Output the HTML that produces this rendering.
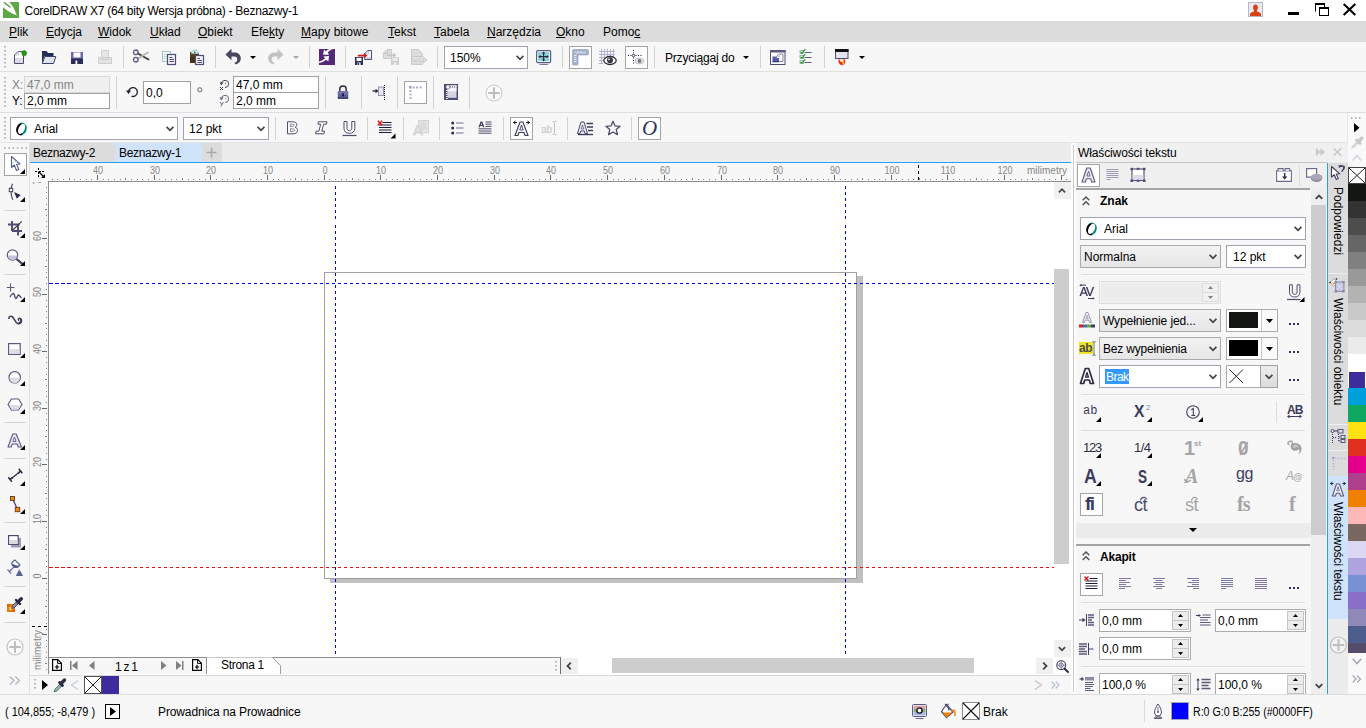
<!DOCTYPE html>
<html><head><meta charset="utf-8"><title>CorelDRAW X7</title>
<style>
*{box-sizing:border-box;margin:0;padding:0}
html,body{width:1366px;height:728px;overflow:hidden;background:#f0f0f0}
body{font-family:"Liberation Sans",sans-serif;font-size:12px;color:#000;position:relative}
.a{position:absolute}
.t{position:absolute;white-space:nowrap;line-height:14px;height:14px}
svg{position:absolute;overflow:visible}
.sep{position:absolute;width:1px;background:#d2d2d2}
.inp{position:absolute;background:#fff;border:1px solid #a0a0a0}
.dd{position:absolute;background:#fff;border:1px solid #a0a0a0}
u{text-decoration:underline;text-underline-offset:1px}
.rl{font-size:10px;color:#868686;line-height:12px;height:12px}
.gr{background:linear-gradient(#f2f2f2,#e6e6e6);border-color:#ababab}
.hl{height:1px;background:#dedede}
.spb{background:#ececec;border:1px solid #c4c4c4}
</style></head><body>
<svg width="0" height="0" style="left:0;top:0"><defs><linearGradient id="og" x1="0" y1="0.800" x2="1" y2="0.200"><stop offset="0.520" stop-color="#000"/><stop offset="0.520" stop-color="#088"/></linearGradient></defs></svg>
<!-- title bar -->
<div class="a" style="left:0;top:0;width:1366px;height:21px;background:#fff"></div>
<svg style="left:3px;top:2px" width="16" height="16" viewBox="0 0 16 16"><rect width="16" height="16" fill="#5aa846"/><path d="M0 0H5.800C8.500 2 10.800 5.500 13.800 13.600C9 11.500 4 9 0 5.200z" fill="#fff"/><path d="M1.400 0.700L7 5" stroke="#5aa846" stroke-width="1.500" stroke-linecap="round"/></svg>
<div class="t" id="title" style="left:24.5px;top:4px;letter-spacing:-0.27px">CorelDRAW X7 (64 bity Wersja próbna) - Beznazwy-1</div>
<!-- window controls -->
<svg style="left:1248px;top:2px" width="15" height="15" viewBox="0 0 15 15"><rect x="0.5" y="0.5" width="14" height="14" fill="#e8e8ee" stroke="#b8b8c4"/><path d="M7.5 2.5c1.6 0 2.4 1.4 2.4 3 0 1.3-.6 2.3-1.1 2.9 0 1 1 1.400 2.600 2.100 1.100.4 1.600 1 1.600 2.500v1h-11v-1c0-1.500.5-2.100 1.600-2.500 1.600-.7 2.600-1.100 2.600-2.100-.5-.6-1.100-1.600-1.100-2.900 0-1.600.8-3 2.400-3z" fill="#d8400e"/></svg>
<div class="a" style="left:1288px;top:12px;width:11px;height:3px;background:#000"></div>
<svg style="left:1315px;top:3px" width="14" height="13" viewBox="0 0 14 13"><path d="M0.500 8.500V1h9v3" fill="none" stroke="#000" stroke-width="1"/><rect x="0" y="0" width="10" height="2" fill="#000"/><rect x="4.500" y="4.500" width="9" height="8" fill="#fff" stroke="#000"/><rect x="4" y="4" width="10" height="2" fill="#000"/></svg>
<svg style="left:1343px;top:4px" width="13" height="11" viewBox="0 0 13 11"><path d="M0.700 0 L12.300 11 M12.300 0 L0.700 11" stroke="#000" stroke-width="2.100" fill="none"/></svg>
<!-- menu bar -->
<div class="a" style="left:0;top:21px;width:1366px;height:21px;background:#dcdcdc"></div>
<div class="t m" style="left:9px;top:25px"><u>P</u>lik</div>
<div class="t m" style="left:46px;top:25px"><u>E</u>dycja</div>
<div class="t m" style="left:98px;top:25px"><u>W</u>idok</div>
<div class="t m" style="left:150px;top:25px"><u>U</u>kład</div>
<div class="t m" style="left:198px;top:25px"><u>O</u>biekt</div>
<div class="t m" style="left:251px;top:25px">Efe<u>k</u>ty</div>
<div class="t m" style="left:301px;top:25px"><u>M</u>apy bitowe</div>
<div class="t m" style="left:388px;top:25px"><u>T</u>ekst</div>
<div class="t m" style="left:434px;top:25px"><u>T</u>abela</div>
<div class="t m" style="left:487px;top:25px"><u>N</u>arzędzia</div>
<div class="t m" style="left:556px;top:25px"><u>O</u>kno</div>
<div class="t m" style="left:603px;top:25px">Pomo<u>c</u></div>
<!-- toolbar 1 -->
<div class="a" style="left:0;top:42px;width:1366px;height:30px;background:#f7f7f7;border-bottom:1px solid #dedede"></div>
<svg style="left:4px;top:46px" width="2" height="24"><g fill="#b4b4b4"><rect y="0" width="2" height="1.500"/><rect y="4" width="2" height="1.500"/><rect y="8" width="2" height="1.500"/><rect y="12" width="2" height="1.500"/><rect y="16" width="2" height="1.500"/><rect y="20" width="2" height="1.500"/></g></svg>
<!-- new -->
<svg style="left:13px;top:49px" width="16" height="16" viewBox="0 0 16 16"><path d="M1.500 14.500V6L5 2.500h5.500v12z" fill="#fff" stroke="#4a4a6e"/><rect x="2" y="9" width="8" height="5" fill="#dcdce8"/><path d="M2 6h3.500V2.500" fill="none" stroke="#a8c4c0" stroke-width="0.800"/><g transform="translate(11.200 4) scale(0.800) translate(-11.200 -4.300)"><path d="M11.200 0.300l.9 1.300 1.500-.5 0 1.600 1.500.5-.9 1.300.9 1.300-1.500.5 0 1.600-1.500-.5-.9 1.300-.9-1.300-1.500.5 0-1.600-1.500-.5.9-1.300-.9-1.300 1.500-.5 0-1.600 1.500.5z" fill="#2a9010"/></g></svg>
<!-- open -->
<svg style="left:41px;top:49px" width="16" height="16" viewBox="0 0 16 16"><path d="M1 14.500V2h4.500l1.500 2h5.500v3H3.500z" fill="#252c58"/><path d="M1.300 14.500L3.800 7.500h11L12.500 14.500z" fill="#e2e2ec" stroke="#3a3f6a"/></svg>
<!-- save -->
<svg style="left:70px;top:51px" width="14" height="14" viewBox="0 0 14 14"><path d="M1 1h10.500L13 2.500V13H1z" fill="#2c2c5a"/><rect x="1" y="1" width="12" height="6.500" fill="#6a6ab0"/><rect x="3.500" y="1.500" width="7" height="5" fill="#fff"/><rect x="4" y="9" width="6" height="4" fill="#2c2c5a"/><rect x="5.500" y="9.500" width="1.800" height="3.500" fill="#fff"/></svg>
<!-- print disabled -->
<svg style="left:97px;top:49px" width="16" height="16" viewBox="0 0 16 16"><rect x="4.500" y="1.500" width="7" height="7" fill="#e6e6e6" stroke="#d2d2d2"/><rect x="1.500" y="8.500" width="13" height="6" fill="#e4e4e4" stroke="#cfcfcf"/><rect x="3.500" y="9.500" width="9" height="1.500" fill="#cfcfcf"/></svg>
<div class="sep" style="left:123px;top:46px;height:22px"></div>
<!-- cut -->
<svg style="left:132px;top:49px" width="18" height="15" viewBox="0 0 18 15"><path d="M6 4.500L16.500 10.500" stroke="#3a3a3a" stroke-width="1.800" stroke-linecap="round"/><path d="M6 9.500L16 3.500" stroke="#b8b4b0" stroke-width="1.800" stroke-linecap="round"/><circle cx="3.800" cy="3.300" r="2.300" fill="none" stroke="#5a5a84" stroke-width="1.300"/><circle cx="3.800" cy="10.700" r="2.300" fill="none" stroke="#5a5a84" stroke-width="1.300"/></svg>
<!-- copy -->
<svg style="left:161px;top:50px" width="16" height="16" viewBox="0 0 16 16"><rect x="1.500" y="1.500" width="8" height="10" fill="#f4faf9" stroke="#9cc8c2"/><path d="M3 4.500h5M3 6.500h5M3 8.500h3" stroke="#b8dcd6"/><rect x="6.500" y="4.500" width="8" height="10" fill="#f2f2f8" stroke="#4c4c74" stroke-width="1.200"/><path d="M8.500 7.500h3M8.500 9.500h4.500M8.500 11.500h4.500" stroke="#4c4c74" stroke-width="1.100"/></svg>
<!-- paste -->
<svg style="left:189px;top:49px" width="16" height="17" viewBox="0 0 16 17"><rect x="1" y="3" width="9" height="11" fill="#5a3c20"/><rect x="1" y="8" width="9" height="6" fill="#4a3018"/><path d="M2.500 4.500v-1.500l2-1.800h3l2 1.800v1.500z" fill="#d8ecea" stroke="#8cc0ba" stroke-width="0.800"/><circle cx="5.800" cy="3.200" r="0.800" fill="#333"/><rect x="6.500" y="6.500" width="8" height="9" fill="#f2f2f8" stroke="#4c4c74" stroke-width="1.200"/><path d="M8.500 9.500h2.500M8.500 11.500h4.500M8.500 13.500h4.500" stroke="#4c4c74" stroke-width="1.100"/></svg>
<div class="sep" style="left:215px;top:46px;height:22px"></div>
<!-- undo -->
<svg style="left:225px;top:48px" width="17" height="17" viewBox="0 0 17 17"><path d="M0.500 6.500L6.500 0.800V4.500H9.500C13.500 4.500 15.800 7.200 15.800 10.500C15.800 13.800 13.200 16.200 10 16.300L9.500 14.800C11.500 14.300 12.300 12.800 12.300 11.200C12.300 9.500 11 8.500 9.500 8.500H6.500V12.200z" fill="#4a4660"/></svg>
<svg style="left:250px;top:56px" width="6" height="3" viewBox="0 0 6 3"><path d="M0 0h6L3 3z" fill="#000"/></svg>
<!-- redo -->
<svg style="left:267px;top:48px" width="17" height="17" viewBox="0 0 17 17"><g transform="translate(17,0) scale(-1,1)"><path d="M0.500 6.500L6.500 0.800V4.500H9.500C13.500 4.500 15.800 7.200 15.800 10.500C15.800 13.800 13.200 16.200 10 16.300L9.500 14.800C11.500 14.300 12.300 12.800 12.300 11.200C12.300 9.500 11 8.500 9.500 8.500H6.500V12.200z" fill="#c2c2c2"/></g></svg>
<svg style="left:293px;top:56px" width="6" height="3" viewBox="0 0 6 3"><path d="M0 0h6L3 3z" fill="#a8a8a8"/></svg>
<div class="sep" style="left:309px;top:46px;height:22px"></div>
<!-- publish -->
<svg style="left:319px;top:49px" width="16" height="16" viewBox="0 0 16 16"><rect width="16" height="16" fill="#542878"/><path d="M14 0C11.500 0.800 9.800 2 8.800 3.400L10 5.800H4.200L4.900 0.500L6.700 2.200C7.800 1.100 9.300 0.400 11 0z" fill="#fff"/><path d="M0 14C3 13.400 5.600 12.200 7.200 10.800L9.400 12.600L10 6.900L4.400 7.600L6.100 9.300C4.600 10.900 2.200 12.100 0 12.700z" fill="#fff"/></svg>
<div class="sep" style="left:345px;top:46px;height:22px"></div>
<!-- import -->
<svg style="left:355px;top:49px" width="17" height="17" viewBox="0 0 17 17"><path d="M9.800 10.500V4.500L13 1.500h3.500v9z" fill="#f4f4f8" stroke="#4c4c74" stroke-width="1"/><path d="M10.500 5h3V2" fill="none" stroke="#9cc8c2" stroke-width="0.800"/><rect x="10.300" y="8.500" width="5.700" height="1.500" fill="#c8c8dc"/><rect x="0" y="8" width="8" height="8" fill="#2c2c5a"/><rect x="1.500" y="8.800" width="5" height="3.200" fill="#fff"/><rect x="2.500" y="13.500" width="3" height="2.500" fill="#fff"/><rect x="3" y="14" width="1.200" height="2" fill="#2c2c5a"/><path d="M2.800 5.800h6v-2l3.500 2.800-3.500 2.800v-2h-6z" fill="#d01818"/></svg>
<!-- export disabled -->
<svg style="left:383px;top:49px" width="17" height="17" viewBox="0 0 17 17"><path d="M0.500 9.500V4L4 0.500h4.500v9z" fill="#dedede" stroke="#cacaca"/><path d="M4.500 0.500v4h-4" fill="none" stroke="#c6c6c6"/><path d="M4 5.500h6v-2l3.500 2.800-3.500 2.800v-2H4z" fill="#c4c4c4"/><rect x="8" y="8" width="8" height="8" fill="#cecece"/><rect x="9.500" y="8.800" width="5" height="3.200" fill="#ececec"/><rect x="10.500" y="13.500" width="3" height="2.500" fill="#ececec"/></svg>
<!-- pdf disabled -->
<svg style="left:411px;top:49px" width="17" height="17" viewBox="0 0 17 17"><path d="M0.500 15.500V0.500h7l4 4v3l4.500 3.500-4.500 3.500v1z" fill="#dcdcdc" stroke="#cacaca"/><rect x="1.500" y="7" width="11" height="5.500" fill="#c4c4c4"/><text x="2" y="11.800" font-family="Liberation Sans" font-weight="bold" font-size="5.500" fill="#f4f4f4">PDF</text></svg>
<div class="sep" style="left:437px;top:46px;height:22px"></div>
<!-- zoom dropdown -->
<div class="dd" style="left:444px;top:46px;width:84px;height:23px;border-color:#a2a2b0"></div>
<div class="t" style="left:450px;top:51px">150%</div>
<svg class="chev" style="left:516px;top:55px" width="8" height="6" viewBox="0 0 8 6"><path d="M0.600 0.800L4 4.300L7.400 0.800" fill="none" stroke="#444" stroke-width="1.700"/></svg>
<!-- fullscreen -->
<svg style="left:536px;top:50px" width="16" height="16" viewBox="0 0 16 16"><rect x="0.600" y="0.600" width="14" height="12" rx="1.200" fill="#fff" stroke="#5a5a84" stroke-width="1.200"/><rect x="2" y="2" width="11.200" height="9.200" fill="#8ed0dc"/><path d="M7.600 2.300v8.600M3.200 6.600h8.800" stroke="#2a2a3c" stroke-width="1.200"/><path d="M7.600 1.600l1.700 2h-3.400zM7.600 11.600l1.700-2h-3.400zM2.400 6.600l2-1.700v3.400zM12.800 6.600l-2-1.700v3.400z" fill="#2a2a3c"/><rect x="3.500" y="14" width="8.500" height="1" fill="#7a7aa0"/></svg>
<div class="sep" style="left:562px;top:46px;height:22px"></div>
<!-- rulers toggle -->
<div class="a" style="left:569px;top:46px;width:23px;height:23px;background:#fff;border:1px solid #a4a4a4"></div>
<svg style="left:572px;top:49px" width="17" height="16" viewBox="0 0 17 16"><path d="M0.500 1.500a1 1 0 0 1 1-1h14a1 1 0 0 1 1 1v3.500a1 1 0 0 1-1 1H6v9a1 1 0 0 1-1 1H1.500a1 1 0 0 1-1-1z" fill="#a4b0cc" stroke="#8c98b8" stroke-width="0.600"/><path d="M3 2.500l1.500 2 1.500-2 1.500 2 1.500-2 1.500 2 1.500-2 1.500 2" stroke="#e8ecf6" stroke-width="1" fill="none"/><path d="M2 6.500h2.500M2 8.500h2.500M2 10.500h2.500M2 12.500h2.500" stroke="#e8ecf6" stroke-width="1.200"/></svg>
<!-- grid eye -->
<svg style="left:599px;top:49px" width="18" height="17" viewBox="0 0 18 17"><path d="M2.500 0v15M5.500 0v8M8.500 0v8M11.500 0v8M14.500 0v8M0 2.500h16M0 5.500h16M0 8.500h6M0 11.500h4M0 14.500h4" stroke="#b0b0d4" stroke-width="1"/><ellipse cx="11" cy="11.500" rx="6.200" ry="4" fill="#fff" stroke="#2c2c34" stroke-width="1.300"/><circle cx="11" cy="11.300" r="3" fill="#3a3a44"/><circle cx="10" cy="10.300" r="0.900" fill="#fff"/></svg>
<!-- guidelines toggle -->
<div class="a" style="left:625px;top:46px;width:23px;height:23px;background:#fff;border:1px solid #a4a4a4"></div>
<svg style="left:627px;top:49px" width="18" height="17" viewBox="0 0 18 17"><path d="M6.500 1v15" stroke="#1a1a3a" stroke-width="1" stroke-dasharray="1 1.500"/><path d="M1 6.500h15" stroke="#1a1a3a" stroke-width="1" stroke-dasharray="1 1.500"/><circle cx="6.500" cy="6.500" r="1.200" fill="#fff" stroke="#1a1a3a" stroke-width="0.800"/><ellipse cx="12.500" cy="12" rx="4.500" ry="2.800" fill="#e8e8ec" stroke="#b4b4bc" stroke-width="0.900"/><circle cx="12.500" cy="11.900" r="2" fill="#77777f"/></svg>
<div class="sep" style="left:654px;top:46px;height:22px"></div>
<div class="t" id="snap" style="left:665px;top:51px;letter-spacing:-0.2px">Przyciągaj do</div>
<svg style="left:743px;top:56px" width="6" height="3" viewBox="0 0 6 3"><path d="M0 0h6L3 3z" fill="#000"/></svg>
<div class="sep" style="left:760px;top:46px;height:22px"></div>
<!-- options -->
<svg style="left:770px;top:50px" width="16" height="15" viewBox="0 0 16 15"><rect x="0.500" y="0.500" width="14.500" height="14" fill="#fff" stroke="#4c4c74" stroke-width="1"/><rect x="0" y="0" width="15.500" height="2.500" fill="#5a5a84"/><path d="M6.500 11.500V6.500L9 4h4v7.500z" fill="#f4f4f8" stroke="#6a6a94" stroke-width="0.800"/><path d="M7 6.500h2.500V4.500" fill="none" stroke="#9cc8c2" stroke-width="0.700"/><path d="M2.500 12V6.500h3l1 1.500h2.500v4z" fill="#5a5aa4"/><rect x="2.500" y="11" width="6.500" height="1.300" fill="#3c3c84"/></svg>
<!-- checklist -->
<svg style="left:799px;top:48px" width="14" height="17" viewBox="0 0 14 17"><g fill="#fff" stroke="#9c9cb4" stroke-width="0.800"><rect x="1" y="2.500" width="3.500" height="3"/><rect x="1" y="7.500" width="3.500" height="3"/><rect x="1" y="12.500" width="3.500" height="3"/></g><path d="M5.500 4.500h7M5.500 9.500h7M5.500 14.500h7" stroke="#5a5a84" stroke-width="1"/><path d="M1.500 3.800l1.300 1.300L6.300 1.200M1.500 8.800l1.300 1.300L6.300 6.200M1.500 13.800l1.300 1.300L6.300 11.200" fill="none" stroke="#18a018" stroke-width="1.200"/></svg>
<div class="sep" style="left:824px;top:46px;height:22px"></div>
<!-- launcher -->
<svg style="left:835px;top:49px" width="14" height="17" viewBox="0 0 14 17"><rect x="0.500" y="0.500" width="12.500" height="9" fill="#e4e4ec" stroke="#4c4c74" stroke-width="1"/><rect x="0" y="0" width="13.500" height="3" fill="#101018"/><path d="M3.500 10.500h6.500c1 2.500 0 5-3 5.800C4 15.500 2.800 13 3.500 10.500z" fill="#f02818"/><path d="M6 11.500h3c.8 2 0 3.800-1.800 4.600.8-1.800.2-3.200-1.200-4.600z" fill="#ffb020"/><ellipse cx="6.500" cy="11.500" rx="1.800" ry="1.200" fill="#f7f7f7"/></svg>
<svg style="left:859px;top:56px" width="6" height="3" viewBox="0 0 6 3"><path d="M0 0h6L3 3z" fill="#000"/></svg>
<!-- property bar -->
<div class="a" style="left:0;top:72px;width:1366px;height:41px;background:#f7f7f7;border-bottom:1px solid #dedede"></div>
<svg style="left:4px;top:77px" width="2" height="32"><g fill="#b4b4b4"><rect y="0" width="2" height="1.500"/><rect y="4" width="2" height="1.500"/><rect y="8" width="2" height="1.500"/><rect y="12" width="2" height="1.500"/><rect y="16" width="2" height="1.500"/><rect y="20" width="2" height="1.500"/><rect y="24" width="2" height="1.500"/><rect y="28" width="2" height="1.500"/></g></svg>
<div class="t" style="left:12px;top:78px;color:#848484">X:</div>
<div class="a" style="left:24px;top:76px;width:86px;height:17px;background:#f0f0f0;border:1px solid #d8d8d8"></div>
<div class="t" style="left:27px;top:78px;color:#848484">47,0 mm</div>
<div class="t" style="left:12px;top:94px">Y:</div>
<div class="inp" style="left:24px;top:93px;width:86px;height:16px"></div>
<div class="t" style="left:27px;top:94px">2,0 mm</div>
<div class="sep" style="left:116px;top:76px;height:33px"></div>
<!-- rotate icon -->
<svg style="left:126px;top:86px" width="13" height="13" viewBox="0 0 13 13"><path d="M5.500 10.200A4.400 4.400 0 1 0 2.600 5.700" fill="none" stroke="#1c1c2c" stroke-width="1.300"/><path d="M0 4.600h5L2.500 8z" fill="#1c1c2c"/></svg>
<div class="inp" style="left:143px;top:81px;width:48px;height:23px"></div>
<div class="t" style="left:146px;top:86px">0,0</div>
<svg style="left:197px;top:87px" width="6" height="6" viewBox="0 0 6 6"><circle cx="2.800" cy="2.800" r="2.100" fill="none" stroke="#555" stroke-width="0.900"/></svg>
<!-- small rotate x / y -->
<svg style="left:219px;top:79px" width="11" height="12" viewBox="0 0 11 12"><path d="M2.500 5A3.600 3.600 0 1 1 6 8.500" fill="none" stroke="#4a4a5c" stroke-width="1"/><path d="M0.500 3.200L4.500 3.600L2.300 6.600z" fill="#4a4a5c"/><circle cx="6.500" cy="4.500" r="0.600" fill="#4a4a5c"/><path d="M1 8l3 3M4 8l-3 3" stroke="#33333f" stroke-width="1"/></svg>
<svg style="left:219px;top:94px" width="11" height="13" viewBox="0 0 11 13"><path d="M2.500 5A3.600 3.600 0 1 1 6 8.500" fill="none" stroke="#6a6a7c" stroke-width="1"/><path d="M0.500 3.200L4.500 3.600L2.300 6.600z" fill="#6a6a7c"/><circle cx="6.500" cy="4.500" r="0.600" fill="#6a6a7c"/><path d="M1 8l1.800 2.500M4.500 8l-2.800 4.500" stroke="#6a6a7c" stroke-width="1" fill="none"/></svg>
<div class="inp" style="left:233px;top:76px;width:86px;height:17px"></div>
<div class="t" style="left:236px;top:78px">47,0 mm</div>
<div class="inp" style="left:233px;top:92px;width:86px;height:17px"></div>
<div class="t" style="left:236px;top:94px">2,0 mm</div>
<div class="sep" style="left:325px;top:76px;height:33px"></div>
<!-- lock -->
<svg style="left:337px;top:85px" width="12" height="14" viewBox="0 0 12 14"><path d="M2.800 6.500V4.200a3.200 3.200 0 0 1 6.400 0V6.500" fill="none" stroke="#2c2c3c" stroke-width="1.500"/><rect x="0.800" y="6" width="10.400" height="7.800" rx="0.800" fill="#5c5c98"/><rect x="0.800" y="6" width="10.400" height="3.500" rx="0.800" fill="#7474ac"/><rect x="0.800" y="12.300" width="10.400" height="1.500" fill="#3a3a6c"/><rect x="5.300" y="8.300" width="1.500" height="3" fill="#111"/></svg>
<div class="sep" style="left:361px;top:76px;height:33px"></div>
<!-- treat as filled / snap -->
<svg style="left:372px;top:84px" width="14" height="16" viewBox="0 0 14 16"><path d="M12.500 1v15" stroke="#111" stroke-width="1" stroke-dasharray="1 1"/><rect x="6.500" y="3" width="5" height="8.500" fill="#e6e6f0" stroke="#8c8ca8" stroke-width="0.900"/><path d="M0.500 7h3.500" stroke="#22223a" stroke-width="1.300"/><path d="M3.500 4.800L6.500 7L3.500 9.200z" fill="#22223a"/></svg>
<div class="sep" style="left:397px;top:76px;height:33px"></div>
<!-- boxed toggle -->
<div class="a" style="left:404px;top:81px;width:23px;height:23px;background:#fff;border:1px solid #a4a4a4"></div>
<svg style="left:407px;top:84px" width="17" height="17" viewBox="0 0 17 17"><path d="M3.500 2.500v13" stroke="#aab0d4" stroke-width="2" stroke-dasharray="2 1.500"/><path d="M2 3.500h14" stroke="#aab0d4" stroke-width="2" stroke-dasharray="2 1.500"/><path d="M2.500 3.500l1.500-1.500" stroke="#8c90b8" stroke-width="1.200"/></svg>
<div class="sep" style="left:433px;top:76px;height:33px"></div>
<!-- ruler page -->
<svg style="left:444px;top:84px" width="14" height="16" viewBox="0 0 14 16"><rect x="0" y="0" width="14" height="16" fill="#4c4c74"/><rect x="3.500" y="3.800" width="9" height="10" fill="#d4d4e2"/><rect x="3.500" y="3.800" width="9" height="3.500" fill="#f4f4f8"/><rect x="3" y="1.200" width="10" height="2.600" rx="1.300" fill="#fff"/><circle cx="3.800" cy="3" r="2" fill="#fff" stroke="#4c4c74" stroke-width="0.600"/><path d="M6.500 2v1.500M8.500 2v1.500M10.500 2v1.500" stroke="#4c4c74" stroke-width="0.700"/><path d="M2.800 6v9" stroke="#fff" stroke-width="1.600" stroke-dasharray="1 1"/></svg>
<div class="sep" style="left:469px;top:76px;height:33px"></div>
<!-- plus circle -->
<svg style="left:485px;top:84px" width="18" height="18" viewBox="0 0 18 18"><circle cx="9" cy="9" r="8" fill="#fbfbfb" stroke="#c6c6c6" stroke-width="1"/><path d="M9 3.200v11.600M3.200 9h11.600" stroke="#bdbdc0" stroke-width="2"/></svg>
<!-- text bar -->
<div class="a" style="left:0;top:113px;width:1366px;height:30px;background:#f7f7f7;border-bottom:1px solid #e4e4e4"></div>
<svg style="left:4px;top:117px" width="2" height="24"><g fill="#b4b4b4"><rect y="0" width="2" height="1.500"/><rect y="4" width="2" height="1.500"/><rect y="8" width="2" height="1.500"/><rect y="12" width="2" height="1.500"/><rect y="16" width="2" height="1.500"/><rect y="20" width="2" height="1.500"/></g></svg>
<div class="dd" style="left:10px;top:117px;width:168px;height:23px;border-color:#a2a2b0"></div>
<svg style="left:15px;top:122px" width="13" height="14" viewBox="0 0 13 14"><ellipse cx="6.500" cy="7" rx="5.200" ry="6.500" transform="rotate(20 6.500 7)" fill="url(#og)"/><ellipse cx="6.600" cy="6.900" rx="3" ry="5.500" transform="rotate(26 6.600 6.900)" fill="#fff"/></svg>
<div class="t" style="left:34px;top:122px">Arial</div>
<svg style="left:166px;top:126px" width="8" height="6" viewBox="0 0 8 6"><path d="M0.600 0.800L4 4.300L7.400 0.800" fill="none" stroke="#444" stroke-width="1.700"/></svg>
<div class="dd" style="left:183px;top:117px;width:86px;height:23px;border-color:#a2a2b0"></div>
<div class="t" style="left:189px;top:122px">12 pkt</div>
<svg style="left:257px;top:126px" width="8" height="6" viewBox="0 0 8 6"><path d="M0.600 0.800L4 4.300L7.400 0.800" fill="none" stroke="#444" stroke-width="1.700"/></svg>
<div class="sep" style="left:275px;top:117px;height:23px"></div>
<!-- B I U -->
<svg style="left:286px;top:121px" width="13" height="14" viewBox="0 0 13 14"><path d="M1.500 0.800h5.800c2.200 0 3.500 1.200 3.500 3 0 1.300-.7 2.200-1.800 2.600 1.500.3 2.500 1.400 2.500 3 0 2.200-1.700 3.400-4.200 3.400H1.500z" fill="#fff" stroke="#4c4c6c" stroke-width="1"/><path d="M4.300 3.200h2.300c.9 0 1.400.4 1.400 1.100s-.5 1.200-1.400 1.200H4.300zM4.300 7.800h2.700c1 0 1.600.5 1.600 1.300s-.6 1.300-1.600 1.300H4.300z" fill="#f7f7f7" stroke="#6c6c8c" stroke-width="0.800"/></svg>
<svg style="left:314px;top:121px" width="14" height="14" viewBox="0 0 14 14"><path d="M4.500 0.800h8.500l-.6 2.400h-2.800l-1.800 7h2.800l-.6 2.600H1.500l.6-2.600h2.800l1.800-7H3.900z" fill="#fff" stroke="#4c4c6c" stroke-width="1"/></svg>
<svg style="left:342px;top:121px" width="15" height="16" viewBox="0 0 15 16"><path d="M2 0.500h3v6.800c0 1.500 1 2.400 2.400 2.400s2.400-.9 2.400-2.400V0.500h3v7c0 3-2.200 4.800-5.400 4.800S2 10.500 2 7.500z" fill="#fff" stroke="#4c4c6c" stroke-width="1"/><path d="M0.500 14.500h14" stroke="#4c4c6c" stroke-width="1.200"/></svg>
<div class="sep" style="left:367px;top:117px;height:23px"></div>
<!-- align -->
<svg style="left:377px;top:120px" width="20" height="19" viewBox="0 0 20 19"><path d="M5.500 2.500h9M2 5h12.500M2 7.500h12.500M2 10h12.500M2 12.500h12.500" stroke="#1c1c3c" stroke-width="1.100"/><path d="M0.800 0.800l4.400 4.400M5.200 0.800L0.800 5.200" stroke="#e01010" stroke-width="1.400"/><path d="M18.500 13.500v5h-5z" fill="#000"/></svg>
<div class="sep" style="left:403px;top:117px;height:23px"></div>
<!-- disabled A page -->
<svg style="left:412px;top:120px" width="18" height="17" viewBox="0 0 18 17"><rect x="6.500" y="0.500" width="10" height="12" fill="#e6e6e6" stroke="#d0d0d0"/><path d="M8.500 3h6M8.500 5h6M8.500 7h6M8.500 9h6" stroke="#cfcfcf"/><path d="M0.500 15.500L4.500 5h3l4 10.500h-2.800l-.7-2h-4l-.7 2z" fill="#d6d6d6"/><path d="M4.800 11h2.400L6 7.500z" fill="#ececec"/></svg>
<div class="sep" style="left:439px;top:117px;height:23px"></div>
<!-- bullets -->
<svg style="left:451px;top:121px" width="13" height="14" viewBox="0 0 13 14"><circle cx="1.700" cy="2" r="1.500" fill="#2c2c44"/><circle cx="1.700" cy="7" r="1.500" fill="#2c2c44"/><circle cx="1.700" cy="12" r="1.500" fill="#2c2c44"/><path d="M5 2h7.500M5 7h7.500M5 12h7.500" stroke="#6c6c8c" stroke-width="1.200"/></svg>
<!-- drop cap -->
<svg style="left:478px;top:121px" width="14" height="13" viewBox="0 0 14 13"><path d="M0.500 6.200L2.600 0.600h1.600l2.100 5.600h-1.400l-.4-1.200H2.300l-.4 1.200z" fill="#3c3c5c"/><path d="M2.700 4h1.400L3.400 2z" fill="#f7f7f7"/><path d="M7.500 1h6M7.500 3.200h6M7.500 5.400h6M0.500 7.800h13M0.500 10h13M0.500 12.200h13" stroke="#4c4c6c" stroke-width="1"/></svg>
<div class="sep" style="left:503px;top:117px;height:23px"></div>
<!-- boxed A -->
<div class="a" style="left:510px;top:117px;width:23px;height:23px;background:#fff;border:1px solid #a4a4a4"></div>
<svg style="left:512px;top:119px" width="19" height="19" viewBox="0 0 19 19"><path d="M3 16.500L8 3h3l5 13.500h-3l-1-3H7l-1 3z" fill="#f4f4f8" stroke="#3c3c5c" stroke-width="1.100"/><path d="M7.800 11h3.400L9.500 6z" fill="#fff" stroke="#3c3c5c" stroke-width="0.900"/><path d="M1 3.500h4M3.500 2l-2 1.500 2 1.500" stroke="#1c1c2c" stroke-width="1" fill="none"/><path d="M14 3.500h4M15.500 2l2 1.500-2 1.500" stroke="#1c1c2c" stroke-width="1" fill="none"/></svg>
<!-- ab| disabled -->
<div class="t" style="left:541px;top:123px;color:#c4c4c4;font-size:10px">ab</div>
<svg style="left:552px;top:121px" width="5" height="14" viewBox="0 0 5 14"><path d="M2.500 1v12M0.500 0.500h1.500M3 0.500h1.500M0.500 13.500h1.500M3 13.500h1.500" stroke="#c0c0cc" stroke-width="1"/></svg>
<div class="sep" style="left:567px;top:117px;height:23px"></div>
<!-- AE -->
<svg style="left:577px;top:121px" width="17" height="14" viewBox="0 0 17 14"><path d="M0.500 12.500L4 1h3l3.500 11.500H8l-.7-2.500H3.700L3 12.500z" fill="#e8e8f0" stroke="#4c4c6c" stroke-width="1"/><path d="M4.300 8h2.400L5.500 4z" fill="#f7f7f7" stroke="#4c4c6c" stroke-width="0.700"/><path d="M9.500 2.500h6.500M10 6h6M11 9.500h5" stroke="#3c3c5c" stroke-width="1.600"/><path d="M1 13.500h15" stroke="#3c3c5c" stroke-width="1.400"/></svg>
<!-- star -->
<svg style="left:605px;top:120px" width="16" height="16" viewBox="0 0 16 16"><path d="M8 1.200l2 4.700 5.100.4-3.900 3.300 1.200 5L8 12l-4.400 2.600 1.200-5L.9 6.300 6 5.900z" fill="#fff" stroke="#4c4c6c" stroke-width="1.300" stroke-linejoin="round"/></svg>
<div class="sep" style="left:631px;top:117px;height:23px"></div>
<!-- boxed O -->
<div class="a" style="left:638px;top:117px;width:23px;height:23px;background:#fff;border:1px solid #a4a4a4"></div>
<div class="t" style="left:642px;top:117px;font-family:'Liberation Serif',serif;font-style:italic;font-size:21px;line-height:23px;height:23px;color:#2c3458">O</div>
<!-- right end -->
<div class="a" style="left:1347px;top:113px;width:1px;height:30px;background:#e6e6e6"></div>
<div class="a" style="left:1348px;top:113px;width:18px;height:31px;background:#f9f9f9"></div>
<svg style="left:1351px;top:117px" width="10" height="2"><g fill="#b4b4b4"><rect x="0" width="1.500" height="2"/><rect x="4" width="1.500" height="2"/><rect x="8" width="1.500" height="2"/></g></svg>
<svg style="left:1354px;top:123px" width="6" height="10" viewBox="0 0 6 10"><path d="M0 0L5.500 4.800L0 9.600z" fill="#000"/></svg>
<!-- work area background -->
<div class="a" style="left:0;top:143px;width:1366px;height:552px;background:#ececec"></div>
<div class="a" style="left:0;top:143px;width:30px;height:552px;background:#f7f7f7"></div>
<div class="a" style="left:29px;top:143px;width:1px;height:552px;background:#e0e0e0"></div>
<div class="a" style="left:30px;top:143px;width:85px;height:19px;background:#dcdcdc"></div>
<div class="a" style="left:115px;top:143px;width:87px;height:19px;background:#cfe3fb"></div>
<div class="a" style="left:202px;top:143px;width:20px;height:19px;background:#dcdcdc"></div>
<div class="t" style="left:33px;top:146px;letter-spacing:-0.33px">Beznazwy-2</div>
<div class="t" style="left:119px;top:146px;letter-spacing:-0.33px">Beznazwy-1</div>
<svg style="left:206px;top:147px" width="11" height="11" viewBox="0 0 11 11"><path d="M5.500 0.500v10M0.500 5.500h10" stroke="#aaa" stroke-width="1.600"/></svg>
<div class="a" style="left:30px;top:162px;width:1041px;height:1px;background:#1ea2f4"></div>
<div class="a" style="left:30px;top:163px;width:1041px;height:19px;background:#f7f7f7"></div>
<div class="a" style="left:30px;top:163px;width:19px;height:512px;background:#f7f7f7"></div>
<div class="a" style="left:49px;top:182px;width:1022px;height:493px;background:#fff"></div>
<div class="a" style="left:48px;top:181px;width:1023px;height:1px;background:#8c8c8c"></div>
<div class="a" style="left:48px;top:181px;width:1px;height:493px;background:#8c8c8c"></div>
<svg style="left:0;top:163px" width="1071" height="19" shape-rendering="crispEdges"><rect x="52" y="16" width="1" height="1" fill="#808080"/><rect x="57" y="16" width="1" height="1" fill="#808080"/><rect x="63" y="16" width="1" height="1" fill="#808080"/><rect x="69" y="15" width="1" height="2" fill="#808080"/><rect x="74" y="16" width="1" height="1" fill="#808080"/><rect x="80" y="16" width="1" height="1" fill="#808080"/><rect x="86" y="16" width="1" height="1" fill="#808080"/><rect x="91" y="16" width="1" height="1" fill="#808080"/><rect x="97" y="12" width="1" height="5" fill="#6a6a6a"/><rect x="103" y="16" width="1" height="1" fill="#808080"/><rect x="108" y="16" width="1" height="1" fill="#808080"/><rect x="114" y="16" width="1" height="1" fill="#808080"/><rect x="120" y="16" width="1" height="1" fill="#808080"/><rect x="125" y="15" width="1" height="2" fill="#808080"/><rect x="131" y="16" width="1" height="1" fill="#808080"/><rect x="137" y="16" width="1" height="1" fill="#808080"/><rect x="142" y="16" width="1" height="1" fill="#808080"/><rect x="148" y="16" width="1" height="1" fill="#808080"/><rect x="154" y="12" width="1" height="5" fill="#6a6a6a"/><rect x="159" y="16" width="1" height="1" fill="#808080"/><rect x="165" y="16" width="1" height="1" fill="#808080"/><rect x="171" y="16" width="1" height="1" fill="#808080"/><rect x="176" y="16" width="1" height="1" fill="#808080"/><rect x="182" y="15" width="1" height="2" fill="#808080"/><rect x="188" y="16" width="1" height="1" fill="#808080"/><rect x="193" y="16" width="1" height="1" fill="#808080"/><rect x="199" y="16" width="1" height="1" fill="#808080"/><rect x="205" y="16" width="1" height="1" fill="#808080"/><rect x="210" y="12" width="1" height="5" fill="#6a6a6a"/><rect x="216" y="16" width="1" height="1" fill="#808080"/><rect x="222" y="16" width="1" height="1" fill="#808080"/><rect x="227" y="16" width="1" height="1" fill="#808080"/><rect x="233" y="16" width="1" height="1" fill="#808080"/><rect x="239" y="15" width="1" height="2" fill="#808080"/><rect x="244" y="16" width="1" height="1" fill="#808080"/><rect x="250" y="16" width="1" height="1" fill="#808080"/><rect x="256" y="16" width="1" height="1" fill="#808080"/><rect x="261" y="16" width="1" height="1" fill="#808080"/><rect x="267" y="12" width="1" height="5" fill="#6a6a6a"/><rect x="273" y="16" width="1" height="1" fill="#808080"/><rect x="278" y="16" width="1" height="1" fill="#808080"/><rect x="284" y="16" width="1" height="1" fill="#808080"/><rect x="290" y="16" width="1" height="1" fill="#808080"/><rect x="295" y="15" width="1" height="2" fill="#808080"/><rect x="301" y="16" width="1" height="1" fill="#808080"/><rect x="307" y="16" width="1" height="1" fill="#808080"/><rect x="312" y="16" width="1" height="1" fill="#808080"/><rect x="318" y="16" width="1" height="1" fill="#808080"/><rect x="324" y="12" width="1" height="5" fill="#6a6a6a"/><rect x="329" y="16" width="1" height="1" fill="#808080"/><rect x="335" y="16" width="1" height="1" fill="#808080"/><rect x="341" y="16" width="1" height="1" fill="#808080"/><rect x="346" y="16" width="1" height="1" fill="#808080"/><rect x="352" y="15" width="1" height="2" fill="#808080"/><rect x="358" y="16" width="1" height="1" fill="#808080"/><rect x="363" y="16" width="1" height="1" fill="#808080"/><rect x="369" y="16" width="1" height="1" fill="#808080"/><rect x="375" y="16" width="1" height="1" fill="#808080"/><rect x="380" y="12" width="1" height="5" fill="#6a6a6a"/><rect x="386" y="16" width="1" height="1" fill="#808080"/><rect x="392" y="16" width="1" height="1" fill="#808080"/><rect x="397" y="16" width="1" height="1" fill="#808080"/><rect x="403" y="16" width="1" height="1" fill="#808080"/><rect x="409" y="15" width="1" height="2" fill="#808080"/><rect x="414" y="16" width="1" height="1" fill="#808080"/><rect x="420" y="16" width="1" height="1" fill="#808080"/><rect x="426" y="16" width="1" height="1" fill="#808080"/><rect x="431" y="16" width="1" height="1" fill="#808080"/><rect x="437" y="12" width="1" height="5" fill="#6a6a6a"/><rect x="443" y="16" width="1" height="1" fill="#808080"/><rect x="448" y="16" width="1" height="1" fill="#808080"/><rect x="454" y="16" width="1" height="1" fill="#808080"/><rect x="460" y="16" width="1" height="1" fill="#808080"/><rect x="465" y="15" width="1" height="2" fill="#808080"/><rect x="471" y="16" width="1" height="1" fill="#808080"/><rect x="477" y="16" width="1" height="1" fill="#808080"/><rect x="482" y="16" width="1" height="1" fill="#808080"/><rect x="488" y="16" width="1" height="1" fill="#808080"/><rect x="494" y="12" width="1" height="5" fill="#6a6a6a"/><rect x="499" y="16" width="1" height="1" fill="#808080"/><rect x="505" y="16" width="1" height="1" fill="#808080"/><rect x="511" y="16" width="1" height="1" fill="#808080"/><rect x="516" y="16" width="1" height="1" fill="#808080"/><rect x="522" y="15" width="1" height="2" fill="#808080"/><rect x="528" y="16" width="1" height="1" fill="#808080"/><rect x="533" y="16" width="1" height="1" fill="#808080"/><rect x="539" y="16" width="1" height="1" fill="#808080"/><rect x="545" y="16" width="1" height="1" fill="#808080"/><rect x="550" y="12" width="1" height="5" fill="#6a6a6a"/><rect x="556" y="16" width="1" height="1" fill="#808080"/><rect x="562" y="16" width="1" height="1" fill="#808080"/><rect x="567" y="16" width="1" height="1" fill="#808080"/><rect x="573" y="16" width="1" height="1" fill="#808080"/><rect x="579" y="15" width="1" height="2" fill="#808080"/><rect x="584" y="16" width="1" height="1" fill="#808080"/><rect x="590" y="16" width="1" height="1" fill="#808080"/><rect x="596" y="16" width="1" height="1" fill="#808080"/><rect x="601" y="16" width="1" height="1" fill="#808080"/><rect x="607" y="12" width="1" height="5" fill="#6a6a6a"/><rect x="613" y="16" width="1" height="1" fill="#808080"/><rect x="618" y="16" width="1" height="1" fill="#808080"/><rect x="624" y="16" width="1" height="1" fill="#808080"/><rect x="630" y="16" width="1" height="1" fill="#808080"/><rect x="635" y="15" width="1" height="2" fill="#808080"/><rect x="641" y="16" width="1" height="1" fill="#808080"/><rect x="647" y="16" width="1" height="1" fill="#808080"/><rect x="652" y="16" width="1" height="1" fill="#808080"/><rect x="658" y="16" width="1" height="1" fill="#808080"/><rect x="664" y="12" width="1" height="5" fill="#6a6a6a"/><rect x="669" y="16" width="1" height="1" fill="#808080"/><rect x="675" y="16" width="1" height="1" fill="#808080"/><rect x="681" y="16" width="1" height="1" fill="#808080"/><rect x="686" y="16" width="1" height="1" fill="#808080"/><rect x="692" y="15" width="1" height="2" fill="#808080"/><rect x="698" y="16" width="1" height="1" fill="#808080"/><rect x="703" y="16" width="1" height="1" fill="#808080"/><rect x="709" y="16" width="1" height="1" fill="#808080"/><rect x="715" y="16" width="1" height="1" fill="#808080"/><rect x="721" y="12" width="1" height="5" fill="#6a6a6a"/><rect x="726" y="16" width="1" height="1" fill="#808080"/><rect x="732" y="16" width="1" height="1" fill="#808080"/><rect x="738" y="16" width="1" height="1" fill="#808080"/><rect x="743" y="16" width="1" height="1" fill="#808080"/><rect x="749" y="15" width="1" height="2" fill="#808080"/><rect x="755" y="16" width="1" height="1" fill="#808080"/><rect x="760" y="16" width="1" height="1" fill="#808080"/><rect x="766" y="16" width="1" height="1" fill="#808080"/><rect x="772" y="16" width="1" height="1" fill="#808080"/><rect x="777" y="12" width="1" height="5" fill="#6a6a6a"/><rect x="783" y="16" width="1" height="1" fill="#808080"/><rect x="789" y="16" width="1" height="1" fill="#808080"/><rect x="794" y="16" width="1" height="1" fill="#808080"/><rect x="800" y="16" width="1" height="1" fill="#808080"/><rect x="806" y="15" width="1" height="2" fill="#808080"/><rect x="811" y="16" width="1" height="1" fill="#808080"/><rect x="817" y="16" width="1" height="1" fill="#808080"/><rect x="823" y="16" width="1" height="1" fill="#808080"/><rect x="828" y="16" width="1" height="1" fill="#808080"/><rect x="834" y="12" width="1" height="5" fill="#6a6a6a"/><rect x="840" y="16" width="1" height="1" fill="#808080"/><rect x="845" y="16" width="1" height="1" fill="#808080"/><rect x="851" y="16" width="1" height="1" fill="#808080"/><rect x="857" y="16" width="1" height="1" fill="#808080"/><rect x="862" y="15" width="1" height="2" fill="#808080"/><rect x="868" y="16" width="1" height="1" fill="#808080"/><rect x="874" y="16" width="1" height="1" fill="#808080"/><rect x="879" y="16" width="1" height="1" fill="#808080"/><rect x="885" y="16" width="1" height="1" fill="#808080"/><rect x="891" y="12" width="1" height="5" fill="#6a6a6a"/><rect x="896" y="16" width="1" height="1" fill="#808080"/><rect x="902" y="16" width="1" height="1" fill="#808080"/><rect x="908" y="16" width="1" height="1" fill="#808080"/><rect x="913" y="16" width="1" height="1" fill="#808080"/><rect x="919" y="15" width="1" height="2" fill="#808080"/><rect x="925" y="16" width="1" height="1" fill="#808080"/><rect x="930" y="16" width="1" height="1" fill="#808080"/><rect x="936" y="16" width="1" height="1" fill="#808080"/><rect x="942" y="16" width="1" height="1" fill="#808080"/><rect x="947" y="12" width="1" height="5" fill="#6a6a6a"/><rect x="953" y="16" width="1" height="1" fill="#808080"/><rect x="959" y="16" width="1" height="1" fill="#808080"/><rect x="964" y="16" width="1" height="1" fill="#808080"/><rect x="970" y="16" width="1" height="1" fill="#808080"/><rect x="976" y="15" width="1" height="2" fill="#808080"/><rect x="981" y="16" width="1" height="1" fill="#808080"/><rect x="987" y="16" width="1" height="1" fill="#808080"/><rect x="993" y="16" width="1" height="1" fill="#808080"/><rect x="998" y="16" width="1" height="1" fill="#808080"/><rect x="1004" y="12" width="1" height="5" fill="#6a6a6a"/><rect x="1010" y="16" width="1" height="1" fill="#808080"/><rect x="1015" y="16" width="1" height="1" fill="#808080"/><rect x="1021" y="16" width="1" height="1" fill="#808080"/><rect x="1027" y="16" width="1" height="1" fill="#808080"/><rect x="1032" y="15" width="1" height="2" fill="#808080"/><rect x="1038" y="16" width="1" height="1" fill="#808080"/><rect x="1044" y="16" width="1" height="1" fill="#808080"/><rect x="1049" y="16" width="1" height="1" fill="#808080"/><rect x="1055" y="16" width="1" height="1" fill="#808080"/><rect x="1061" y="12" width="1" height="5" fill="#6a6a6a"/><rect x="1066" y="16" width="1" height="1" fill="#808080"/><rect x="918" y="2" width="1" height="3" fill="#000"/><rect x="918" y="8" width="1" height="3" fill="#000"/><rect x="918" y="14" width="1" height="3" fill="#000"/></svg>
<div class="t rl" style="left:83px;top:165px;width:30px;text-align:center;transform:scaleX(0.9)">40</div>
<div class="t rl" style="left:140px;top:165px;width:30px;text-align:center;transform:scaleX(0.9)">30</div>
<div class="t rl" style="left:196px;top:165px;width:30px;text-align:center;transform:scaleX(0.9)">20</div>
<div class="t rl" style="left:253px;top:165px;width:30px;text-align:center;transform:scaleX(0.9)">10</div>
<div class="t rl" style="left:310px;top:165px;width:30px;text-align:center;transform:scaleX(0.9)">0</div>
<div class="t rl" style="left:366px;top:165px;width:30px;text-align:center;transform:scaleX(0.9)">10</div>
<div class="t rl" style="left:423px;top:165px;width:30px;text-align:center;transform:scaleX(0.9)">20</div>
<div class="t rl" style="left:480px;top:165px;width:30px;text-align:center;transform:scaleX(0.9)">30</div>
<div class="t rl" style="left:536px;top:165px;width:30px;text-align:center;transform:scaleX(0.9)">40</div>
<div class="t rl" style="left:593px;top:165px;width:30px;text-align:center;transform:scaleX(0.9)">50</div>
<div class="t rl" style="left:650px;top:165px;width:30px;text-align:center;transform:scaleX(0.9)">60</div>
<div class="t rl" style="left:707px;top:165px;width:30px;text-align:center;transform:scaleX(0.9)">70</div>
<div class="t rl" style="left:763px;top:165px;width:30px;text-align:center;transform:scaleX(0.9)">80</div>
<div class="t rl" style="left:820px;top:165px;width:30px;text-align:center;transform:scaleX(0.9)">90</div>
<div class="t rl" style="left:877px;top:165px;width:30px;text-align:center;transform:scaleX(0.9)">100</div>
<div class="t rl" style="left:933px;top:165px;width:30px;text-align:center;transform:scaleX(0.9)">110</div>
<div class="t rl" style="left:990px;top:165px;width:30px;text-align:center;transform:scaleX(0.9)">120</div>
<div class="t rl" style="left:1027px;top:165px">milimetry</div>
<svg style="left:30px;top:163px" width="19" height="512" shape-rendering="crispEdges"><rect x="16" y="506" width="1" height="1" fill="#808080"/><rect x="15" y="500" width="2" height="1" fill="#808080"/><rect x="16" y="494" width="1" height="1" fill="#808080"/><rect x="16" y="489" width="1" height="1" fill="#808080"/><rect x="16" y="483" width="1" height="1" fill="#808080"/><rect x="16" y="477" width="1" height="1" fill="#808080"/><rect x="12" y="471" width="5" height="1" fill="#6a6a6a"/><rect x="16" y="466" width="1" height="1" fill="#808080"/><rect x="16" y="460" width="1" height="1" fill="#808080"/><rect x="16" y="454" width="1" height="1" fill="#808080"/><rect x="16" y="449" width="1" height="1" fill="#808080"/><rect x="15" y="443" width="2" height="1" fill="#808080"/><rect x="16" y="437" width="1" height="1" fill="#808080"/><rect x="16" y="432" width="1" height="1" fill="#808080"/><rect x="16" y="426" width="1" height="1" fill="#808080"/><rect x="16" y="420" width="1" height="1" fill="#808080"/><rect x="12" y="415" width="5" height="1" fill="#6a6a6a"/><rect x="16" y="409" width="1" height="1" fill="#808080"/><rect x="16" y="403" width="1" height="1" fill="#808080"/><rect x="16" y="398" width="1" height="1" fill="#808080"/><rect x="16" y="392" width="1" height="1" fill="#808080"/><rect x="15" y="386" width="2" height="1" fill="#808080"/><rect x="16" y="381" width="1" height="1" fill="#808080"/><rect x="16" y="375" width="1" height="1" fill="#808080"/><rect x="16" y="369" width="1" height="1" fill="#808080"/><rect x="16" y="364" width="1" height="1" fill="#808080"/><rect x="12" y="358" width="5" height="1" fill="#6a6a6a"/><rect x="16" y="352" width="1" height="1" fill="#808080"/><rect x="16" y="347" width="1" height="1" fill="#808080"/><rect x="16" y="341" width="1" height="1" fill="#808080"/><rect x="16" y="335" width="1" height="1" fill="#808080"/><rect x="15" y="330" width="2" height="1" fill="#808080"/><rect x="16" y="324" width="1" height="1" fill="#808080"/><rect x="16" y="318" width="1" height="1" fill="#808080"/><rect x="16" y="313" width="1" height="1" fill="#808080"/><rect x="16" y="307" width="1" height="1" fill="#808080"/><rect x="12" y="301" width="5" height="1" fill="#6a6a6a"/><rect x="16" y="296" width="1" height="1" fill="#808080"/><rect x="16" y="290" width="1" height="1" fill="#808080"/><rect x="16" y="284" width="1" height="1" fill="#808080"/><rect x="16" y="279" width="1" height="1" fill="#808080"/><rect x="15" y="273" width="2" height="1" fill="#808080"/><rect x="16" y="267" width="1" height="1" fill="#808080"/><rect x="16" y="262" width="1" height="1" fill="#808080"/><rect x="16" y="256" width="1" height="1" fill="#808080"/><rect x="16" y="250" width="1" height="1" fill="#808080"/><rect x="12" y="245" width="5" height="1" fill="#6a6a6a"/><rect x="16" y="239" width="1" height="1" fill="#808080"/><rect x="16" y="233" width="1" height="1" fill="#808080"/><rect x="16" y="228" width="1" height="1" fill="#808080"/><rect x="16" y="222" width="1" height="1" fill="#808080"/><rect x="15" y="216" width="2" height="1" fill="#808080"/><rect x="16" y="211" width="1" height="1" fill="#808080"/><rect x="16" y="205" width="1" height="1" fill="#808080"/><rect x="16" y="199" width="1" height="1" fill="#808080"/><rect x="16" y="194" width="1" height="1" fill="#808080"/><rect x="12" y="188" width="5" height="1" fill="#6a6a6a"/><rect x="16" y="182" width="1" height="1" fill="#808080"/><rect x="16" y="177" width="1" height="1" fill="#808080"/><rect x="16" y="171" width="1" height="1" fill="#808080"/><rect x="16" y="165" width="1" height="1" fill="#808080"/><rect x="15" y="160" width="2" height="1" fill="#808080"/><rect x="16" y="154" width="1" height="1" fill="#808080"/><rect x="16" y="148" width="1" height="1" fill="#808080"/><rect x="16" y="143" width="1" height="1" fill="#808080"/><rect x="16" y="137" width="1" height="1" fill="#808080"/><rect x="12" y="131" width="5" height="1" fill="#6a6a6a"/><rect x="16" y="126" width="1" height="1" fill="#808080"/><rect x="16" y="120" width="1" height="1" fill="#808080"/><rect x="16" y="114" width="1" height="1" fill="#808080"/><rect x="16" y="109" width="1" height="1" fill="#808080"/><rect x="15" y="103" width="2" height="1" fill="#808080"/><rect x="16" y="97" width="1" height="1" fill="#808080"/><rect x="16" y="92" width="1" height="1" fill="#808080"/><rect x="16" y="86" width="1" height="1" fill="#808080"/><rect x="16" y="80" width="1" height="1" fill="#808080"/><rect x="12" y="75" width="5" height="1" fill="#6a6a6a"/><rect x="16" y="69" width="1" height="1" fill="#808080"/><rect x="16" y="63" width="1" height="1" fill="#808080"/><rect x="16" y="58" width="1" height="1" fill="#808080"/><rect x="16" y="52" width="1" height="1" fill="#808080"/><rect x="15" y="46" width="2" height="1" fill="#808080"/><rect x="16" y="41" width="1" height="1" fill="#808080"/><rect x="16" y="35" width="1" height="1" fill="#808080"/><rect x="16" y="29" width="1" height="1" fill="#808080"/><rect x="16" y="24" width="1" height="1" fill="#808080"/><rect x="2" y="463" width="3" height="1" fill="#000"/><rect x="8" y="463" width="3" height="1" fill="#000"/><rect x="14" y="463" width="3" height="1" fill="#000"/></svg>
<div class="t rl" style="left:23px;top:570px;width:30px;text-align:center;transform:rotate(-90deg) scaleX(0.9)">0</div>
<div class="t rl" style="left:23px;top:513px;width:30px;text-align:center;transform:rotate(-90deg) scaleX(0.9)">10</div>
<div class="t rl" style="left:23px;top:456px;width:30px;text-align:center;transform:rotate(-90deg) scaleX(0.9)">20</div>
<div class="t rl" style="left:23px;top:400px;width:30px;text-align:center;transform:rotate(-90deg) scaleX(0.9)">30</div>
<div class="t rl" style="left:23px;top:343px;width:30px;text-align:center;transform:rotate(-90deg) scaleX(0.9)">40</div>
<div class="t rl" style="left:23px;top:286px;width:30px;text-align:center;transform:rotate(-90deg) scaleX(0.9)">50</div>
<div class="t rl" style="left:23px;top:230px;width:30px;text-align:center;transform:rotate(-90deg) scaleX(0.9)">60</div>
<div class="t rl" style="left:13px;top:644px;width:50px;text-align:center;transform:rotate(-90deg)">milimetry</div>
<div class="a" style="left:30px;top:182px;width:18px;height:5px;overflow:hidden"><div class="t rl" style="left:-7px;top:-9px;width:30px;text-align:center;transform:rotate(-90deg)">70</div></div>
<svg style="left:35px;top:168px" width="12" height="12" viewBox="0 0 12 12" shape-rendering="crispEdges"><path d="M3.500 0v11" stroke="#000" stroke-width="1" stroke-dasharray="2 1.500"/><path d="M0 3.500h11" stroke="#000" stroke-width="1" stroke-dasharray="2 1.500"/><path d="M3.500 3.500L9 9" stroke="#000" stroke-width="1.200" shape-rendering="auto"/><path d="M10 10V6L6 10z" fill="#000" shape-rendering="auto"/></svg>
<div class="a" style="left:857px;top:276px;width:6px;height:307px;background:#c0c0c0"></div>
<div class="a" style="left:330px;top:579px;width:533px;height:4px;background:#c0c0c0"></div>
<div class="a" style="left:324px;top:272px;width:533px;height:307px;background:#fff;border:1px solid #a0a0a0"></div>
<svg style="left:0;top:0" width="1366" height="728" shape-rendering="crispEdges"><rect x="49" y="283" width="1" height="1" fill="#0000ff"/><rect x="55" y="283" width="1" height="1" fill="#0000ff"/><rect x="61" y="283" width="1" height="1" fill="#0000ff"/><rect x="67" y="283" width="1" height="1" fill="#0000ff"/><rect x="50" y="283" width="3" height="1" fill="#0000ff"/><rect x="56" y="283" width="3" height="1" fill="#0000ff"/><rect x="62" y="283" width="3" height="1" fill="#0000ff"/><rect x="68" y="283" width="3" height="1" fill="#0000ff"/><rect x="74" y="283" width="3" height="1" fill="#0000ff"/><rect x="80" y="283" width="3" height="1" fill="#0000ff"/><rect x="86" y="283" width="3" height="1" fill="#0000ff"/><rect x="92" y="283" width="3" height="1" fill="#0000ff"/><rect x="98" y="283" width="3" height="1" fill="#0000ff"/><rect x="104" y="283" width="3" height="1" fill="#0000ff"/><rect x="110" y="283" width="3" height="1" fill="#0000ff"/><rect x="116" y="283" width="3" height="1" fill="#0000ff"/><rect x="122" y="283" width="3" height="1" fill="#0000ff"/><rect x="128" y="283" width="3" height="1" fill="#0000ff"/><rect x="134" y="283" width="3" height="1" fill="#0000ff"/><rect x="140" y="283" width="3" height="1" fill="#0000ff"/><rect x="146" y="283" width="3" height="1" fill="#0000ff"/><rect x="152" y="283" width="3" height="1" fill="#0000ff"/><rect x="158" y="283" width="3" height="1" fill="#0000ff"/><rect x="164" y="283" width="3" height="1" fill="#0000ff"/><rect x="170" y="283" width="3" height="1" fill="#0000ff"/><rect x="176" y="283" width="3" height="1" fill="#0000ff"/><rect x="182" y="283" width="3" height="1" fill="#0000ff"/><rect x="188" y="283" width="3" height="1" fill="#0000ff"/><rect x="194" y="283" width="3" height="1" fill="#0000ff"/><rect x="200" y="283" width="3" height="1" fill="#0000ff"/><rect x="206" y="283" width="3" height="1" fill="#0000ff"/><rect x="212" y="283" width="3" height="1" fill="#0000ff"/><rect x="218" y="283" width="3" height="1" fill="#0000ff"/><rect x="224" y="283" width="3" height="1" fill="#0000ff"/><rect x="230" y="283" width="3" height="1" fill="#0000ff"/><rect x="236" y="283" width="3" height="1" fill="#0000ff"/><rect x="242" y="283" width="3" height="1" fill="#0000ff"/><rect x="248" y="283" width="3" height="1" fill="#0000ff"/><rect x="254" y="283" width="3" height="1" fill="#0000ff"/><rect x="260" y="283" width="3" height="1" fill="#0000ff"/><rect x="266" y="283" width="3" height="1" fill="#0000ff"/><rect x="272" y="283" width="3" height="1" fill="#0000ff"/><rect x="278" y="283" width="3" height="1" fill="#0000ff"/><rect x="284" y="283" width="3" height="1" fill="#0000ff"/><rect x="290" y="283" width="3" height="1" fill="#0000ff"/><rect x="296" y="283" width="3" height="1" fill="#0000ff"/><rect x="302" y="283" width="3" height="1" fill="#0000ff"/><rect x="308" y="283" width="3" height="1" fill="#0000ff"/><rect x="314" y="283" width="3" height="1" fill="#0000ff"/><rect x="320" y="283" width="3" height="1" fill="#0000ff"/><rect x="326" y="283" width="3" height="1" fill="#0000ff"/><rect x="332" y="283" width="3" height="1" fill="#0000ff"/><rect x="338" y="283" width="3" height="1" fill="#0000ff"/><rect x="344" y="283" width="3" height="1" fill="#0000ff"/><rect x="350" y="283" width="3" height="1" fill="#0000ff"/><rect x="356" y="283" width="3" height="1" fill="#0000ff"/><rect x="362" y="283" width="3" height="1" fill="#0000ff"/><rect x="368" y="283" width="3" height="1" fill="#0000ff"/><rect x="374" y="283" width="3" height="1" fill="#0000ff"/><rect x="380" y="283" width="3" height="1" fill="#0000ff"/><rect x="386" y="283" width="3" height="1" fill="#0000ff"/><rect x="392" y="283" width="3" height="1" fill="#0000ff"/><rect x="398" y="283" width="3" height="1" fill="#0000ff"/><rect x="404" y="283" width="3" height="1" fill="#0000ff"/><rect x="410" y="283" width="3" height="1" fill="#0000ff"/><rect x="416" y="283" width="3" height="1" fill="#0000ff"/><rect x="422" y="283" width="3" height="1" fill="#0000ff"/><rect x="428" y="283" width="3" height="1" fill="#0000ff"/><rect x="434" y="283" width="3" height="1" fill="#0000ff"/><rect x="440" y="283" width="3" height="1" fill="#0000ff"/><rect x="446" y="283" width="3" height="1" fill="#0000ff"/><rect x="452" y="283" width="3" height="1" fill="#0000ff"/><rect x="458" y="283" width="3" height="1" fill="#0000ff"/><rect x="464" y="283" width="3" height="1" fill="#0000ff"/><rect x="470" y="283" width="3" height="1" fill="#0000ff"/><rect x="476" y="283" width="3" height="1" fill="#0000ff"/><rect x="482" y="283" width="3" height="1" fill="#0000ff"/><rect x="488" y="283" width="3" height="1" fill="#0000ff"/><rect x="494" y="283" width="3" height="1" fill="#0000ff"/><rect x="500" y="283" width="3" height="1" fill="#0000ff"/><rect x="506" y="283" width="3" height="1" fill="#0000ff"/><rect x="512" y="283" width="3" height="1" fill="#0000ff"/><rect x="518" y="283" width="3" height="1" fill="#0000ff"/><rect x="524" y="283" width="3" height="1" fill="#0000ff"/><rect x="530" y="283" width="3" height="1" fill="#0000ff"/><rect x="536" y="283" width="3" height="1" fill="#0000ff"/><rect x="542" y="283" width="3" height="1" fill="#0000ff"/><rect x="548" y="283" width="3" height="1" fill="#0000ff"/><rect x="554" y="283" width="3" height="1" fill="#0000ff"/><rect x="560" y="283" width="3" height="1" fill="#0000ff"/><rect x="566" y="283" width="3" height="1" fill="#0000ff"/><rect x="572" y="283" width="3" height="1" fill="#0000ff"/><rect x="578" y="283" width="3" height="1" fill="#0000ff"/><rect x="584" y="283" width="3" height="1" fill="#0000ff"/><rect x="590" y="283" width="3" height="1" fill="#0000ff"/><rect x="596" y="283" width="3" height="1" fill="#0000ff"/><rect x="602" y="283" width="3" height="1" fill="#0000ff"/><rect x="608" y="283" width="3" height="1" fill="#0000ff"/><rect x="614" y="283" width="3" height="1" fill="#0000ff"/><rect x="620" y="283" width="3" height="1" fill="#0000ff"/><rect x="626" y="283" width="3" height="1" fill="#0000ff"/><rect x="632" y="283" width="3" height="1" fill="#0000ff"/><rect x="638" y="283" width="3" height="1" fill="#0000ff"/><rect x="644" y="283" width="3" height="1" fill="#0000ff"/><rect x="650" y="283" width="3" height="1" fill="#0000ff"/><rect x="656" y="283" width="3" height="1" fill="#0000ff"/><rect x="662" y="283" width="3" height="1" fill="#0000ff"/><rect x="668" y="283" width="3" height="1" fill="#0000ff"/><rect x="674" y="283" width="3" height="1" fill="#0000ff"/><rect x="680" y="283" width="3" height="1" fill="#0000ff"/><rect x="686" y="283" width="3" height="1" fill="#0000ff"/><rect x="692" y="283" width="3" height="1" fill="#0000ff"/><rect x="698" y="283" width="3" height="1" fill="#0000ff"/><rect x="704" y="283" width="3" height="1" fill="#0000ff"/><rect x="710" y="283" width="3" height="1" fill="#0000ff"/><rect x="716" y="283" width="3" height="1" fill="#0000ff"/><rect x="722" y="283" width="3" height="1" fill="#0000ff"/><rect x="728" y="283" width="3" height="1" fill="#0000ff"/><rect x="734" y="283" width="3" height="1" fill="#0000ff"/><rect x="740" y="283" width="3" height="1" fill="#0000ff"/><rect x="746" y="283" width="3" height="1" fill="#0000ff"/><rect x="752" y="283" width="3" height="1" fill="#0000ff"/><rect x="758" y="283" width="3" height="1" fill="#0000ff"/><rect x="764" y="283" width="3" height="1" fill="#0000ff"/><rect x="770" y="283" width="3" height="1" fill="#0000ff"/><rect x="776" y="283" width="3" height="1" fill="#0000ff"/><rect x="782" y="283" width="3" height="1" fill="#0000ff"/><rect x="788" y="283" width="3" height="1" fill="#0000ff"/><rect x="794" y="283" width="3" height="1" fill="#0000ff"/><rect x="800" y="283" width="3" height="1" fill="#0000ff"/><rect x="806" y="283" width="3" height="1" fill="#0000ff"/><rect x="812" y="283" width="3" height="1" fill="#0000ff"/><rect x="818" y="283" width="3" height="1" fill="#0000ff"/><rect x="824" y="283" width="3" height="1" fill="#0000ff"/><rect x="830" y="283" width="3" height="1" fill="#0000ff"/><rect x="836" y="283" width="3" height="1" fill="#0000ff"/><rect x="842" y="283" width="3" height="1" fill="#0000ff"/><rect x="848" y="283" width="3" height="1" fill="#0000ff"/><rect x="854" y="283" width="3" height="1" fill="#0000ff"/><rect x="860" y="283" width="3" height="1" fill="#0000ff"/><rect x="866" y="283" width="3" height="1" fill="#0000ff"/><rect x="872" y="283" width="3" height="1" fill="#0000ff"/><rect x="878" y="283" width="3" height="1" fill="#0000ff"/><rect x="884" y="283" width="3" height="1" fill="#0000ff"/><rect x="890" y="283" width="3" height="1" fill="#0000ff"/><rect x="896" y="283" width="3" height="1" fill="#0000ff"/><rect x="902" y="283" width="3" height="1" fill="#0000ff"/><rect x="908" y="283" width="3" height="1" fill="#0000ff"/><rect x="914" y="283" width="3" height="1" fill="#0000ff"/><rect x="920" y="283" width="3" height="1" fill="#0000ff"/><rect x="926" y="283" width="3" height="1" fill="#0000ff"/><rect x="932" y="283" width="3" height="1" fill="#0000ff"/><rect x="938" y="283" width="3" height="1" fill="#0000ff"/><rect x="944" y="283" width="3" height="1" fill="#0000ff"/><rect x="950" y="283" width="3" height="1" fill="#0000ff"/><rect x="956" y="283" width="3" height="1" fill="#0000ff"/><rect x="962" y="283" width="3" height="1" fill="#0000ff"/><rect x="968" y="283" width="3" height="1" fill="#0000ff"/><rect x="974" y="283" width="3" height="1" fill="#0000ff"/><rect x="980" y="283" width="3" height="1" fill="#0000ff"/><rect x="986" y="283" width="3" height="1" fill="#0000ff"/><rect x="992" y="283" width="3" height="1" fill="#0000ff"/><rect x="998" y="283" width="3" height="1" fill="#0000ff"/><rect x="1004" y="283" width="3" height="1" fill="#0000ff"/><rect x="1010" y="283" width="3" height="1" fill="#0000ff"/><rect x="1016" y="283" width="3" height="1" fill="#0000ff"/><rect x="1022" y="283" width="3" height="1" fill="#0000ff"/><rect x="1028" y="283" width="3" height="1" fill="#0000ff"/><rect x="1034" y="283" width="3" height="1" fill="#0000ff"/><rect x="1040" y="283" width="3" height="1" fill="#0000ff"/><rect x="1046" y="283" width="3" height="1" fill="#0000ff"/><rect x="1052" y="283" width="2" height="1" fill="#0000ff"/><rect x="49" y="567" width="1" height="1" fill="#e41414"/><rect x="55" y="567" width="1" height="1" fill="#e41414"/><rect x="61" y="567" width="1" height="1" fill="#e41414"/><rect x="67" y="567" width="1" height="1" fill="#e41414"/><rect x="50" y="567" width="3" height="1" fill="#e41414"/><rect x="56" y="567" width="3" height="1" fill="#e41414"/><rect x="62" y="567" width="3" height="1" fill="#e41414"/><rect x="68" y="567" width="3" height="1" fill="#e41414"/><rect x="74" y="567" width="3" height="1" fill="#e41414"/><rect x="80" y="567" width="3" height="1" fill="#e41414"/><rect x="86" y="567" width="3" height="1" fill="#e41414"/><rect x="92" y="567" width="3" height="1" fill="#e41414"/><rect x="98" y="567" width="3" height="1" fill="#e41414"/><rect x="104" y="567" width="3" height="1" fill="#e41414"/><rect x="110" y="567" width="3" height="1" fill="#e41414"/><rect x="116" y="567" width="3" height="1" fill="#e41414"/><rect x="122" y="567" width="3" height="1" fill="#e41414"/><rect x="128" y="567" width="3" height="1" fill="#e41414"/><rect x="134" y="567" width="3" height="1" fill="#e41414"/><rect x="140" y="567" width="3" height="1" fill="#e41414"/><rect x="146" y="567" width="3" height="1" fill="#e41414"/><rect x="152" y="567" width="3" height="1" fill="#e41414"/><rect x="158" y="567" width="3" height="1" fill="#e41414"/><rect x="164" y="567" width="3" height="1" fill="#e41414"/><rect x="170" y="567" width="3" height="1" fill="#e41414"/><rect x="176" y="567" width="3" height="1" fill="#e41414"/><rect x="182" y="567" width="3" height="1" fill="#e41414"/><rect x="188" y="567" width="3" height="1" fill="#e41414"/><rect x="194" y="567" width="3" height="1" fill="#e41414"/><rect x="200" y="567" width="3" height="1" fill="#e41414"/><rect x="206" y="567" width="3" height="1" fill="#e41414"/><rect x="212" y="567" width="3" height="1" fill="#e41414"/><rect x="218" y="567" width="3" height="1" fill="#e41414"/><rect x="224" y="567" width="3" height="1" fill="#e41414"/><rect x="230" y="567" width="3" height="1" fill="#e41414"/><rect x="236" y="567" width="3" height="1" fill="#e41414"/><rect x="242" y="567" width="3" height="1" fill="#e41414"/><rect x="248" y="567" width="3" height="1" fill="#e41414"/><rect x="254" y="567" width="3" height="1" fill="#e41414"/><rect x="260" y="567" width="3" height="1" fill="#e41414"/><rect x="266" y="567" width="3" height="1" fill="#e41414"/><rect x="272" y="567" width="3" height="1" fill="#e41414"/><rect x="278" y="567" width="3" height="1" fill="#e41414"/><rect x="284" y="567" width="3" height="1" fill="#e41414"/><rect x="290" y="567" width="3" height="1" fill="#e41414"/><rect x="296" y="567" width="3" height="1" fill="#e41414"/><rect x="302" y="567" width="3" height="1" fill="#e41414"/><rect x="308" y="567" width="3" height="1" fill="#e41414"/><rect x="314" y="567" width="3" height="1" fill="#e41414"/><rect x="320" y="567" width="3" height="1" fill="#e41414"/><rect x="326" y="567" width="3" height="1" fill="#e41414"/><rect x="332" y="567" width="3" height="1" fill="#e41414"/><rect x="338" y="567" width="3" height="1" fill="#e41414"/><rect x="344" y="567" width="3" height="1" fill="#e41414"/><rect x="350" y="567" width="3" height="1" fill="#e41414"/><rect x="356" y="567" width="3" height="1" fill="#e41414"/><rect x="362" y="567" width="3" height="1" fill="#e41414"/><rect x="368" y="567" width="3" height="1" fill="#e41414"/><rect x="374" y="567" width="3" height="1" fill="#e41414"/><rect x="380" y="567" width="3" height="1" fill="#e41414"/><rect x="386" y="567" width="3" height="1" fill="#e41414"/><rect x="392" y="567" width="3" height="1" fill="#e41414"/><rect x="398" y="567" width="3" height="1" fill="#e41414"/><rect x="404" y="567" width="3" height="1" fill="#e41414"/><rect x="410" y="567" width="3" height="1" fill="#e41414"/><rect x="416" y="567" width="3" height="1" fill="#e41414"/><rect x="422" y="567" width="3" height="1" fill="#e41414"/><rect x="428" y="567" width="3" height="1" fill="#e41414"/><rect x="434" y="567" width="3" height="1" fill="#e41414"/><rect x="440" y="567" width="3" height="1" fill="#e41414"/><rect x="446" y="567" width="3" height="1" fill="#e41414"/><rect x="452" y="567" width="3" height="1" fill="#e41414"/><rect x="458" y="567" width="3" height="1" fill="#e41414"/><rect x="464" y="567" width="3" height="1" fill="#e41414"/><rect x="470" y="567" width="3" height="1" fill="#e41414"/><rect x="476" y="567" width="3" height="1" fill="#e41414"/><rect x="482" y="567" width="3" height="1" fill="#e41414"/><rect x="488" y="567" width="3" height="1" fill="#e41414"/><rect x="494" y="567" width="3" height="1" fill="#e41414"/><rect x="500" y="567" width="3" height="1" fill="#e41414"/><rect x="506" y="567" width="3" height="1" fill="#e41414"/><rect x="512" y="567" width="3" height="1" fill="#e41414"/><rect x="518" y="567" width="3" height="1" fill="#e41414"/><rect x="524" y="567" width="3" height="1" fill="#e41414"/><rect x="530" y="567" width="3" height="1" fill="#e41414"/><rect x="536" y="567" width="3" height="1" fill="#e41414"/><rect x="542" y="567" width="3" height="1" fill="#e41414"/><rect x="548" y="567" width="3" height="1" fill="#e41414"/><rect x="554" y="567" width="3" height="1" fill="#e41414"/><rect x="560" y="567" width="3" height="1" fill="#e41414"/><rect x="566" y="567" width="3" height="1" fill="#e41414"/><rect x="572" y="567" width="3" height="1" fill="#e41414"/><rect x="578" y="567" width="3" height="1" fill="#e41414"/><rect x="584" y="567" width="3" height="1" fill="#e41414"/><rect x="590" y="567" width="3" height="1" fill="#e41414"/><rect x="596" y="567" width="3" height="1" fill="#e41414"/><rect x="602" y="567" width="3" height="1" fill="#e41414"/><rect x="608" y="567" width="3" height="1" fill="#e41414"/><rect x="614" y="567" width="3" height="1" fill="#e41414"/><rect x="620" y="567" width="3" height="1" fill="#e41414"/><rect x="626" y="567" width="3" height="1" fill="#e41414"/><rect x="632" y="567" width="3" height="1" fill="#e41414"/><rect x="638" y="567" width="3" height="1" fill="#e41414"/><rect x="644" y="567" width="3" height="1" fill="#e41414"/><rect x="650" y="567" width="3" height="1" fill="#e41414"/><rect x="656" y="567" width="3" height="1" fill="#e41414"/><rect x="662" y="567" width="3" height="1" fill="#e41414"/><rect x="668" y="567" width="3" height="1" fill="#e41414"/><rect x="674" y="567" width="3" height="1" fill="#e41414"/><rect x="680" y="567" width="3" height="1" fill="#e41414"/><rect x="686" y="567" width="3" height="1" fill="#e41414"/><rect x="692" y="567" width="3" height="1" fill="#e41414"/><rect x="698" y="567" width="3" height="1" fill="#e41414"/><rect x="704" y="567" width="3" height="1" fill="#e41414"/><rect x="710" y="567" width="3" height="1" fill="#e41414"/><rect x="716" y="567" width="3" height="1" fill="#e41414"/><rect x="722" y="567" width="3" height="1" fill="#e41414"/><rect x="728" y="567" width="3" height="1" fill="#e41414"/><rect x="734" y="567" width="3" height="1" fill="#e41414"/><rect x="740" y="567" width="3" height="1" fill="#e41414"/><rect x="746" y="567" width="3" height="1" fill="#e41414"/><rect x="752" y="567" width="3" height="1" fill="#e41414"/><rect x="758" y="567" width="3" height="1" fill="#e41414"/><rect x="764" y="567" width="3" height="1" fill="#e41414"/><rect x="770" y="567" width="3" height="1" fill="#e41414"/><rect x="776" y="567" width="3" height="1" fill="#e41414"/><rect x="782" y="567" width="3" height="1" fill="#e41414"/><rect x="788" y="567" width="3" height="1" fill="#e41414"/><rect x="794" y="567" width="3" height="1" fill="#e41414"/><rect x="800" y="567" width="3" height="1" fill="#e41414"/><rect x="806" y="567" width="3" height="1" fill="#e41414"/><rect x="812" y="567" width="3" height="1" fill="#e41414"/><rect x="818" y="567" width="3" height="1" fill="#e41414"/><rect x="824" y="567" width="3" height="1" fill="#e41414"/><rect x="830" y="567" width="3" height="1" fill="#e41414"/><rect x="836" y="567" width="3" height="1" fill="#e41414"/><rect x="842" y="567" width="3" height="1" fill="#e41414"/><rect x="848" y="567" width="3" height="1" fill="#e41414"/><rect x="854" y="567" width="3" height="1" fill="#e41414"/><rect x="860" y="567" width="3" height="1" fill="#e41414"/><rect x="866" y="567" width="3" height="1" fill="#e41414"/><rect x="872" y="567" width="3" height="1" fill="#e41414"/><rect x="878" y="567" width="3" height="1" fill="#e41414"/><rect x="884" y="567" width="3" height="1" fill="#e41414"/><rect x="890" y="567" width="3" height="1" fill="#e41414"/><rect x="896" y="567" width="3" height="1" fill="#e41414"/><rect x="902" y="567" width="3" height="1" fill="#e41414"/><rect x="908" y="567" width="3" height="1" fill="#e41414"/><rect x="914" y="567" width="3" height="1" fill="#e41414"/><rect x="920" y="567" width="3" height="1" fill="#e41414"/><rect x="926" y="567" width="3" height="1" fill="#e41414"/><rect x="932" y="567" width="3" height="1" fill="#e41414"/><rect x="938" y="567" width="3" height="1" fill="#e41414"/><rect x="944" y="567" width="3" height="1" fill="#e41414"/><rect x="950" y="567" width="3" height="1" fill="#e41414"/><rect x="956" y="567" width="3" height="1" fill="#e41414"/><rect x="962" y="567" width="3" height="1" fill="#e41414"/><rect x="968" y="567" width="3" height="1" fill="#e41414"/><rect x="974" y="567" width="3" height="1" fill="#e41414"/><rect x="980" y="567" width="3" height="1" fill="#e41414"/><rect x="986" y="567" width="3" height="1" fill="#e41414"/><rect x="992" y="567" width="3" height="1" fill="#e41414"/><rect x="998" y="567" width="3" height="1" fill="#e41414"/><rect x="1004" y="567" width="3" height="1" fill="#e41414"/><rect x="1010" y="567" width="3" height="1" fill="#e41414"/><rect x="1016" y="567" width="3" height="1" fill="#e41414"/><rect x="1022" y="567" width="3" height="1" fill="#e41414"/><rect x="1028" y="567" width="3" height="1" fill="#e41414"/><rect x="1034" y="567" width="3" height="1" fill="#e41414"/><rect x="1040" y="567" width="3" height="1" fill="#e41414"/><rect x="1046" y="567" width="3" height="1" fill="#e41414"/><rect x="1052" y="567" width="2" height="1" fill="#e41414"/><rect x="335" y="186" width="1" height="3" fill="#0000ff"/><rect x="335" y="192" width="1" height="3" fill="#0000ff"/><rect x="335" y="198" width="1" height="3" fill="#0000ff"/><rect x="335" y="204" width="1" height="3" fill="#0000ff"/><rect x="335" y="210" width="1" height="3" fill="#0000ff"/><rect x="335" y="216" width="1" height="3" fill="#0000ff"/><rect x="335" y="225" width="1" height="3" fill="#0000ff"/><rect x="335" y="231" width="1" height="3" fill="#0000ff"/><rect x="335" y="237" width="1" height="3" fill="#0000ff"/><rect x="335" y="243" width="1" height="3" fill="#0000ff"/><rect x="335" y="249" width="1" height="3" fill="#0000ff"/><rect x="335" y="255" width="1" height="3" fill="#0000ff"/><rect x="335" y="261" width="1" height="3" fill="#0000ff"/><rect x="335" y="267" width="1" height="3" fill="#0000ff"/><rect x="335" y="273" width="1" height="3" fill="#0000ff"/><rect x="335" y="279" width="1" height="3" fill="#0000ff"/><rect x="335" y="285" width="1" height="3" fill="#0000ff"/><rect x="335" y="291" width="1" height="3" fill="#0000ff"/><rect x="335" y="297" width="1" height="3" fill="#0000ff"/><rect x="335" y="303" width="1" height="3" fill="#0000ff"/><rect x="335" y="309" width="1" height="3" fill="#0000ff"/><rect x="335" y="315" width="1" height="3" fill="#0000ff"/><rect x="335" y="321" width="1" height="3" fill="#0000ff"/><rect x="335" y="327" width="1" height="3" fill="#0000ff"/><rect x="335" y="333" width="1" height="3" fill="#0000ff"/><rect x="335" y="339" width="1" height="3" fill="#0000ff"/><rect x="335" y="345" width="1" height="3" fill="#0000ff"/><rect x="335" y="351" width="1" height="3" fill="#0000ff"/><rect x="335" y="357" width="1" height="3" fill="#0000ff"/><rect x="335" y="363" width="1" height="3" fill="#0000ff"/><rect x="335" y="369" width="1" height="3" fill="#0000ff"/><rect x="335" y="375" width="1" height="3" fill="#0000ff"/><rect x="335" y="381" width="1" height="3" fill="#0000ff"/><rect x="335" y="387" width="1" height="3" fill="#0000ff"/><rect x="335" y="393" width="1" height="3" fill="#0000ff"/><rect x="335" y="399" width="1" height="3" fill="#0000ff"/><rect x="335" y="405" width="1" height="3" fill="#0000ff"/><rect x="335" y="411" width="1" height="3" fill="#0000ff"/><rect x="335" y="417" width="1" height="3" fill="#0000ff"/><rect x="335" y="423" width="1" height="3" fill="#0000ff"/><rect x="335" y="429" width="1" height="3" fill="#0000ff"/><rect x="335" y="435" width="1" height="3" fill="#0000ff"/><rect x="335" y="441" width="1" height="3" fill="#0000ff"/><rect x="335" y="447" width="1" height="3" fill="#0000ff"/><rect x="335" y="453" width="1" height="3" fill="#0000ff"/><rect x="335" y="459" width="1" height="3" fill="#0000ff"/><rect x="335" y="465" width="1" height="3" fill="#0000ff"/><rect x="335" y="471" width="1" height="3" fill="#0000ff"/><rect x="335" y="477" width="1" height="3" fill="#0000ff"/><rect x="335" y="483" width="1" height="3" fill="#0000ff"/><rect x="335" y="489" width="1" height="3" fill="#0000ff"/><rect x="335" y="495" width="1" height="3" fill="#0000ff"/><rect x="335" y="501" width="1" height="3" fill="#0000ff"/><rect x="335" y="507" width="1" height="3" fill="#0000ff"/><rect x="335" y="513" width="1" height="3" fill="#0000ff"/><rect x="335" y="519" width="1" height="3" fill="#0000ff"/><rect x="335" y="525" width="1" height="3" fill="#0000ff"/><rect x="335" y="531" width="1" height="3" fill="#0000ff"/><rect x="335" y="537" width="1" height="3" fill="#0000ff"/><rect x="335" y="543" width="1" height="3" fill="#0000ff"/><rect x="335" y="549" width="1" height="3" fill="#0000ff"/><rect x="335" y="555" width="1" height="3" fill="#0000ff"/><rect x="335" y="561" width="1" height="3" fill="#0000ff"/><rect x="335" y="567" width="1" height="3" fill="#0000ff"/><rect x="335" y="573" width="1" height="3" fill="#0000ff"/><rect x="335" y="579" width="1" height="3" fill="#0000ff"/><rect x="335" y="585" width="1" height="3" fill="#0000ff"/><rect x="335" y="591" width="1" height="3" fill="#0000ff"/><rect x="335" y="597" width="1" height="3" fill="#0000ff"/><rect x="335" y="603" width="1" height="3" fill="#0000ff"/><rect x="335" y="609" width="1" height="3" fill="#0000ff"/><rect x="335" y="615" width="1" height="3" fill="#0000ff"/><rect x="335" y="621" width="1" height="3" fill="#0000ff"/><rect x="335" y="627" width="1" height="3" fill="#0000ff"/><rect x="335" y="633" width="1" height="3" fill="#0000ff"/><rect x="335" y="639" width="1" height="3" fill="#0000ff"/><rect x="335" y="645" width="1" height="3" fill="#0000ff"/><rect x="335" y="651" width="1" height="3" fill="#0000ff"/><rect x="845" y="186" width="1" height="3" fill="#0000ff"/><rect x="845" y="192" width="1" height="3" fill="#0000ff"/><rect x="845" y="198" width="1" height="3" fill="#0000ff"/><rect x="845" y="204" width="1" height="3" fill="#0000ff"/><rect x="845" y="210" width="1" height="3" fill="#0000ff"/><rect x="845" y="216" width="1" height="3" fill="#0000ff"/><rect x="845" y="225" width="1" height="3" fill="#0000ff"/><rect x="845" y="231" width="1" height="3" fill="#0000ff"/><rect x="845" y="237" width="1" height="3" fill="#0000ff"/><rect x="845" y="243" width="1" height="3" fill="#0000ff"/><rect x="845" y="249" width="1" height="3" fill="#0000ff"/><rect x="845" y="255" width="1" height="3" fill="#0000ff"/><rect x="845" y="261" width="1" height="3" fill="#0000ff"/><rect x="845" y="267" width="1" height="3" fill="#0000ff"/><rect x="845" y="273" width="1" height="3" fill="#0000ff"/><rect x="845" y="279" width="1" height="3" fill="#0000ff"/><rect x="845" y="285" width="1" height="3" fill="#0000ff"/><rect x="845" y="291" width="1" height="3" fill="#0000ff"/><rect x="845" y="297" width="1" height="3" fill="#0000ff"/><rect x="845" y="303" width="1" height="3" fill="#0000ff"/><rect x="845" y="309" width="1" height="3" fill="#0000ff"/><rect x="845" y="315" width="1" height="3" fill="#0000ff"/><rect x="845" y="321" width="1" height="3" fill="#0000ff"/><rect x="845" y="327" width="1" height="3" fill="#0000ff"/><rect x="845" y="333" width="1" height="3" fill="#0000ff"/><rect x="845" y="339" width="1" height="3" fill="#0000ff"/><rect x="845" y="345" width="1" height="3" fill="#0000ff"/><rect x="845" y="351" width="1" height="3" fill="#0000ff"/><rect x="845" y="357" width="1" height="3" fill="#0000ff"/><rect x="845" y="363" width="1" height="3" fill="#0000ff"/><rect x="845" y="369" width="1" height="3" fill="#0000ff"/><rect x="845" y="375" width="1" height="3" fill="#0000ff"/><rect x="845" y="381" width="1" height="3" fill="#0000ff"/><rect x="845" y="387" width="1" height="3" fill="#0000ff"/><rect x="845" y="393" width="1" height="3" fill="#0000ff"/><rect x="845" y="399" width="1" height="3" fill="#0000ff"/><rect x="845" y="405" width="1" height="3" fill="#0000ff"/><rect x="845" y="411" width="1" height="3" fill="#0000ff"/><rect x="845" y="417" width="1" height="3" fill="#0000ff"/><rect x="845" y="423" width="1" height="3" fill="#0000ff"/><rect x="845" y="429" width="1" height="3" fill="#0000ff"/><rect x="845" y="435" width="1" height="3" fill="#0000ff"/><rect x="845" y="441" width="1" height="3" fill="#0000ff"/><rect x="845" y="447" width="1" height="3" fill="#0000ff"/><rect x="845" y="453" width="1" height="3" fill="#0000ff"/><rect x="845" y="459" width="1" height="3" fill="#0000ff"/><rect x="845" y="465" width="1" height="3" fill="#0000ff"/><rect x="845" y="471" width="1" height="3" fill="#0000ff"/><rect x="845" y="477" width="1" height="3" fill="#0000ff"/><rect x="845" y="483" width="1" height="3" fill="#0000ff"/><rect x="845" y="489" width="1" height="3" fill="#0000ff"/><rect x="845" y="495" width="1" height="3" fill="#0000ff"/><rect x="845" y="501" width="1" height="3" fill="#0000ff"/><rect x="845" y="507" width="1" height="3" fill="#0000ff"/><rect x="845" y="513" width="1" height="3" fill="#0000ff"/><rect x="845" y="519" width="1" height="3" fill="#0000ff"/><rect x="845" y="525" width="1" height="3" fill="#0000ff"/><rect x="845" y="531" width="1" height="3" fill="#0000ff"/><rect x="845" y="537" width="1" height="3" fill="#0000ff"/><rect x="845" y="543" width="1" height="3" fill="#0000ff"/><rect x="845" y="549" width="1" height="3" fill="#0000ff"/><rect x="845" y="555" width="1" height="3" fill="#0000ff"/><rect x="845" y="561" width="1" height="3" fill="#0000ff"/><rect x="845" y="567" width="1" height="3" fill="#0000ff"/><rect x="845" y="573" width="1" height="3" fill="#0000ff"/><rect x="845" y="579" width="1" height="3" fill="#0000ff"/><rect x="845" y="585" width="1" height="3" fill="#0000ff"/><rect x="845" y="591" width="1" height="3" fill="#0000ff"/><rect x="845" y="597" width="1" height="3" fill="#0000ff"/><rect x="845" y="603" width="1" height="3" fill="#0000ff"/><rect x="845" y="609" width="1" height="3" fill="#0000ff"/><rect x="845" y="615" width="1" height="3" fill="#0000ff"/><rect x="845" y="621" width="1" height="3" fill="#0000ff"/><rect x="845" y="627" width="1" height="3" fill="#0000ff"/><rect x="845" y="633" width="1" height="3" fill="#0000ff"/><rect x="845" y="639" width="1" height="3" fill="#0000ff"/><rect x="845" y="645" width="1" height="3" fill="#0000ff"/><rect x="845" y="651" width="1" height="3" fill="#0000ff"/></svg>
<div class="a" style="left:1054px;top:182px;width:17px;height:17px;background:#f0f0f0"></div>
<svg style="left:1058px;top:188px" width="8" height="6" viewBox="0 0 8 6"><path d="M0.900 4.300L4 1.200L7.100 4.300" fill="none" stroke="#444" stroke-width="1.700"/></svg>
<div class="a" style="left:1054px;top:269px;width:15px;height:295px;background:#cdcdcd"></div>
<div class="a" style="left:1054px;top:640px;width:17px;height:17px;background:#f0f0f0"></div>
<svg style="left:1058px;top:646px" width="8" height="6" viewBox="0 0 8 6"><path d="M0.900 1.200L4 4.300L7.100 1.200" fill="none" stroke="#444" stroke-width="1.700"/></svg>
<div class="a" style="left:49px;top:657px;width:512px;height:17px;background:#f7f7f7;border-top:1px solid #909090;border-right:1px solid #707070"></div>
<svg style="left:52px;top:659px" width="10" height="12" viewBox="0 0 10 12"><path d="M0.600 0.600h5.200l3.600 3.600v7.200h-8.800z" fill="#fff" stroke="#000" stroke-width="1.200"/><path d="M5.600 0.600v3.800h3.800" fill="none" stroke="#000" stroke-width="1"/><path d="M5 5.800v4.400M2.800 8h4.400" stroke="#000" stroke-width="1.200"/></svg>
<svg style="left:70px;top:661px" width="8" height="9" viewBox="0 0 8 9"><rect x="0" y="0" width="1.500" height="9" fill="#808080"/><path d="M7.500 0v9L2 4.500z" fill="#808080"/></svg>
<svg style="left:89px;top:661px" width="6" height="9" viewBox="0 0 6 9"><path d="M5.500 0v9L0 4.500z" fill="#808080"/></svg>
<div class="t" id="pg" style="left:115px;top:660px;word-spacing:-1.500px">1 z 1</div>
<svg style="left:161px;top:661px" width="6" height="9" viewBox="0 0 6 9"><path d="M0 0v9L5.500 4.500z" fill="#808080"/></svg>
<svg style="left:176px;top:661px" width="8" height="9" viewBox="0 0 8 9"><rect x="6" y="0" width="1.500" height="9" fill="#808080"/><path d="M0 0v9L5.500 4.500z" fill="#808080"/></svg>
<svg style="left:192px;top:659px" width="10" height="12" viewBox="0 0 10 12"><path d="M0.600 0.600h5.200l3.600 3.600v7.200h-8.800z" fill="#fff" stroke="#000" stroke-width="1.200"/><path d="M5.600 0.600v3.800h3.800" fill="none" stroke="#000" stroke-width="1"/><path d="M5 5.800v4.400M2.800 8h4.400" stroke="#000" stroke-width="1.200"/></svg>
<svg style="left:206px;top:657px" width="76" height="18" viewBox="0 0 76 18"><path d="M0.500 0.500H67L74.500 8.500V17H0.500z" fill="#fff"/><path d="M0.500 1V17" stroke="#909090" stroke-width="1" fill="none"/><path d="M66.500 0.500L74.500 8.500V17" stroke="#a0a0a0" stroke-width="1" fill="none"/></svg>
<div class="t" id="strona" style="left:221px;top:658px;letter-spacing:-0.300px">Strona 1</div>
<svg style="left:555px;top:661px" width="2" height="12"><g fill="#b4b4b4"><rect y="0" width="2" height="1.500"/><rect y="4" width="2" height="1.500"/><rect y="8" width="2" height="1.500"/></g></svg>
<div class="a" style="left:561px;top:658px;width:17px;height:16px;background:#f0f0f0"></div>
<svg style="left:566px;top:662px" width="6" height="8" viewBox="0 0 6 8"><path d="M4.800 0.700L1.500 4L4.800 7.300" fill="none" stroke="#444" stroke-width="1.800"/></svg>
<div class="a" style="left:612px;top:658px;width:362px;height:15px;background:#cdcdcd"></div>
<div class="a" style="left:1036px;top:658px;width:17px;height:16px;background:#f0f0f0"></div>
<svg style="left:1042px;top:662px" width="6" height="8" viewBox="0 0 6 8"><path d="M1.200 0.700L4.500 4L1.200 7.300" fill="none" stroke="#444" stroke-width="1.800"/></svg>
<svg style="left:1056px;top:660px" width="13" height="13" viewBox="0 0 13 13"><circle cx="5.200" cy="5.200" r="4.400" fill="#fff" stroke="#3c3c5c" stroke-width="1.100"/><circle cx="5.200" cy="5.200" r="2.200" fill="none" stroke="#6c6c8c" stroke-width="0.900"/><path d="M5.200 1v8.400M1 5.200h8.400" stroke="#6c6c8c" stroke-width="0.700"/><path d="M8.500 8.500L12 12" stroke="#2c2c44" stroke-width="2" stroke-linecap="round"/></svg>
<div class="a" style="left:1071px;top:143px;width:5px;height:552px;background:#fdfdfd"></div>
<div class="a" style="left:1073px;top:145px;width:1px;height:547px;background:#cccccc"></div>
<div class="a" style="left:30px;top:675px;width:1041px;height:20px;background:#f7f7f7;border-top:1px solid #d8d8d8"></div>
<svg style="left:34px;top:679px" width="2" height="12"><g fill="#b4b4b4"><rect y="0" width="2" height="1.500"/><rect y="4" width="2" height="1.500"/><rect y="8" width="2" height="1.500"/></g></svg>
<svg style="left:42px;top:680px" width="6" height="10" viewBox="0 0 6 10"><path d="M0 0L6 5L0 10z" fill="#000"/></svg>
<svg style="left:53px;top:678px" width="14" height="15" viewBox="0 0 14 15"><path d="M1 14l1-3 5.500-5.500 2 2L4 13z" fill="#8cb4b0" stroke="#4c6c6c" stroke-width="0.800"/><path d="M6.500 4.500l3 3" stroke="#1c1c2c" stroke-width="2.600" stroke-linecap="round"/><path d="M8 5.500l3.500-3.500" stroke="#2c2c44" stroke-width="3.400" stroke-linecap="round"/></svg>
<svg style="left:70px;top:680px" width="9" height="10" viewBox="0 0 9 10"><path d="M8 0.500L1.500 5L8 9.500" fill="none" stroke="#c8d0dc" stroke-width="1.500"/></svg>
<svg style="left:84px;top:676px" width="18" height="18" viewBox="0 0 18 18"><rect x="0.500" y="0.500" width="17" height="17" fill="#fff" stroke="#555" stroke-width="1"/><path d="M1 1L17 17M17 1L1 17" stroke="#222" stroke-width="1"/></svg>
<div class="a" style="left:102px;top:676px;width:17px;height:18px;background:#3c2c9c"></div>
<svg style="left:1034px;top:680px" width="9" height="10" viewBox="0 0 9 10"><path d="M1 0.500L7.500 5L1 9.500" fill="none" stroke="#cfcfcf" stroke-width="1.600"/></svg>
<svg style="left:1051px;top:681px" width="9" height="8" viewBox="0 0 9 8"><path d="M0.700 0.500L4 4L0.700 7.500M4.700 0.500L8 4L4.700 7.500" fill="none" stroke="#b4c0d4" stroke-width="1.100"/></svg>
<!-- toolbox -->
<svg style="left:4px;top:147px" width="24" height="2"><g fill="#b8b8b8"><rect x="0" width="1.500" height="2"/><rect x="4.300" width="1.500" height="2"/><rect x="8.600" width="1.500" height="2"/><rect x="12.900" width="1.500" height="2"/><rect x="17.200" width="1.500" height="2"/><rect x="21.500" width="1.500" height="2"/></g></svg>
<div class="a" style="left:4px;top:153px;width:23px;height:23px;background:#fff;border:1px solid #a4a4a4"></div>
<!-- pick -->
<svg style="left:10px;top:155px" width="12" height="17" viewBox="0 0 12 17"><path d="M1.500 1.500V12.500L4.300 10L6.500 15.500L8.800 14.500L6.600 9.300L10 9z" fill="#fff" stroke="#5a6084" stroke-width="1.100" stroke-linejoin="round"/><path d="M2.300 8l2-1.500 3 .5" stroke="#c8c8d8" stroke-width="1" fill="none"/></svg>
<svg class="fly" style="left:20px;top:169px" width="5" height="5" viewBox="0 0 5 5"><path d="M5 0v5H0z" fill="#000"/></svg>
<!-- shape -->
<svg style="left:8px;top:183px" width="15" height="18" viewBox="0 0 15 18"><path d="M4.500 0.800C2.500 5 2.500 12 4.800 16.800" fill="none" stroke="#4c4c6c" stroke-width="1.200"/><rect x="1.300" y="5.300" width="3.400" height="3.400" fill="#fff" stroke="#3c3c5c" stroke-width="1"/><path d="M6 9L12.700 12L8.800 15.800z" fill="#2c2c44"/></svg>
<svg class="fly" style="left:20px;top:197px" width="5" height="5" viewBox="0 0 5 5"><path d="M5 0v5H0z" fill="#000"/></svg>
<div class="a" style="left:4px;top:210px;width:22px;height:1px;background:#d6d6d6"></div>
<!-- crop -->
<svg style="left:8px;top:221px" width="15" height="15" viewBox="0 0 15 15"><path d="M0 3.500h11.500M4 0v10M4 10h10M10 3.500v11" stroke="#4c4c6c" stroke-width="1.900" fill="none"/><path d="M13.800 0.300L4.800 9" stroke="#3c3c54" stroke-width="1.100"/></svg>
<svg class="fly" style="left:20px;top:233px" width="5" height="5" viewBox="0 0 5 5"><path d="M5 0v5H0z" fill="#000"/></svg>
<!-- zoom -->
<svg style="left:6px;top:249px" width="18" height="17" viewBox="0 0 18 17"><circle cx="6.500" cy="6" r="5.200" fill="#fff" stroke="#5a5a7c" stroke-width="1.200"/><path d="M2 6.500h9a4.500 4.500 0 0 1-9 0z" fill="#c4c4dc"/><path d="M10.500 10L16.500 15" stroke="#3c3c5c" stroke-width="2.200"/></svg>
<svg class="fly" style="left:20px;top:261px" width="5" height="5" viewBox="0 0 5 5"><path d="M5 0v5H0z" fill="#000"/></svg>
<div class="a" style="left:4px;top:274px;width:22px;height:1px;background:#d6d6d6"></div>
<!-- freehand -->
<svg style="left:6px;top:283px" width="17" height="17" viewBox="0 0 17 17"><path d="M4.600 0.500v8M0.800 4.500h7.600" stroke="#5a5a84" stroke-width="1.100"/><path d="M4 13.800C5.500 11.500 7 10 7.800 10.700C8.800 11.500 8.500 15 9.800 15.500C11 15.800 11.500 12 12.500 12C13.500 12 14 14 15.500 15" fill="none" stroke="#3c3c64" stroke-width="1.300"/></svg>
<svg class="fly" style="left:20px;top:297px" width="5" height="5" viewBox="0 0 5 5"><path d="M5 0v5H0z" fill="#000"/></svg>
<!-- artistic media -->
<svg style="left:8px;top:315px" width="15" height="11" viewBox="0 0 15 11"><path d="M0.800 4C0.500 1.800 2.500 0.800 4 1.500C6.500 2.600 6.500 7.500 9.800 8.500C12 9.200 13.800 7.500 13.500 5.500C13.300 3.800 12 3 11 3.500C10 4 10.200 5.500 11.200 5.500" fill="none" stroke="#3c3c54" stroke-width="1.500"/><path d="M9 8.200C11.500 9.800 14.300 8 14 5.200C13.700 3 11.500 2.300 10.500 3.500C12.500 3.300 13 6.500 11 7.200z" fill="#3c3c54"/></svg>
<!-- rectangle -->
<svg style="left:8px;top:343px" width="13" height="12" viewBox="0 0 13 12"><rect x="0.600" y="0.600" width="11.600" height="10.800" fill="#fff" stroke="#5a5a7c" stroke-width="1.200"/><rect x="1.200" y="6.200" width="10.400" height="4.600" fill="#dcdce8"/></svg>
<svg class="fly" style="left:20px;top:353px" width="5" height="5" viewBox="0 0 5 5"><path d="M5 0v5H0z" fill="#000"/></svg>
<!-- ellipse -->
<svg style="left:8px;top:371px" width="13" height="13" viewBox="0 0 13 13"><circle cx="6.700" cy="6.300" r="5.700" fill="#fff" stroke="#5a5a7c" stroke-width="1.200"/><path d="M1.500 6.800h10.400a5.200 5.200 0 0 1-10.400 0z" fill="#dcdce8"/></svg>
<svg class="fly" style="left:20px;top:381px" width="5" height="5" viewBox="0 0 5 5"><path d="M5 0v5H0z" fill="#000"/></svg>
<!-- polygon -->
<svg style="left:7px;top:398px" width="16" height="13" viewBox="0 0 16 13"><path d="M1 6.500L4.500 1h7L15 6.500L11.500 12h-7z" fill="#fff" stroke="#5a5a7c" stroke-width="1.200" stroke-linejoin="round"/><path d="M1.800 7h12.400L11.200 11.400H4.800z" fill="#dcdce8"/></svg>
<svg class="fly" style="left:20px;top:409px" width="5" height="5" viewBox="0 0 5 5"><path d="M5 0v5H0z" fill="#000"/></svg>
<div class="a" style="left:4px;top:422px;width:22px;height:1px;background:#d6d6d6"></div>
<!-- text -->
<svg style="left:7px;top:433px" width="16" height="15" viewBox="0 0 16 15"><path d="M1 14L5.800 1h3.400L14.500 14h-3.300l-1-3H5.200l-1 3z" fill="#e8e8f2" stroke="#5a5a7c" stroke-width="1.100" stroke-linejoin="round"/><path d="M6 8.500h3L7.500 4z" fill="#f7f7f7" stroke="#5a5a7c" stroke-width="0.900"/></svg>
<svg class="fly" style="left:20px;top:445px" width="5" height="5" viewBox="0 0 5 5"><path d="M5 0v5H0z" fill="#000"/></svg>
<div class="a" style="left:4px;top:458px;width:22px;height:1px;background:#d6d6d6"></div>
<!-- dimension -->
<svg style="left:8px;top:468px" width="15" height="14" viewBox="0 0 15 14"><path d="M1.800 11.800L12.800 3" stroke="#2c2c44" stroke-width="1.300"/><path d="M0.300 9.200L3.800 13.800M10.800 0.800L14.300 5.300" stroke="#2c2c44" stroke-width="1.500"/><path d="M1.800 11.800l3.300-1-1.500-2zM12.800 3l-3.300 1 1.500 2z" fill="#2c2c44"/></svg>
<svg class="fly" style="left:20px;top:481px" width="5" height="5" viewBox="0 0 5 5"><path d="M5 0v5H0z" fill="#000"/></svg>
<!-- connector -->
<svg style="left:10px;top:496px" width="11" height="17" viewBox="0 0 11 17"><path d="M2.500 2.500L7.500 13.500" stroke="#3c3c64" stroke-width="1.200"/><rect x="0.500" y="0.500" width="4" height="4" fill="#f88400" stroke="#5a3c2c" stroke-width="0.900"/><rect x="5.300" y="11.300" width="4.400" height="4.400" fill="#f88400" stroke="#5a3c2c" stroke-width="0.900"/></svg>
<svg class="fly" style="left:20px;top:509px" width="5" height="5" viewBox="0 0 5 5"><path d="M5 0v5H0z" fill="#000"/></svg>
<div class="a" style="left:4px;top:522px;width:22px;height:1px;background:#d6d6d6"></div>
<!-- drop shadow -->
<svg style="left:8px;top:535px" width="14" height="13" viewBox="0 0 14 13"><rect x="3" y="3" width="10" height="9.500" fill="#9c9cb8"/><rect x="0.600" y="0.600" width="9.600" height="8.800" fill="#fff" stroke="#4c4c6c" stroke-width="1.200"/><rect x="1.200" y="5" width="8.400" height="3.800" fill="#dcdce8"/></svg>
<svg class="fly" style="left:20px;top:545px" width="5" height="5" viewBox="0 0 5 5"><path d="M5 0v5H0z" fill="#000"/></svg>
<!-- transparency -->
<svg style="left:6px;top:559px" width="18" height="18" viewBox="0 0 18 18"><path d="M1.500 10.500L5 14.500M3.300 12.500L8.500 7.500" stroke="#6a70a0" stroke-width="1.200" fill="none"/><path d="M6 3.500L8.800 0.800L14 6C12.500 8.800 9.500 9.300 7.500 7.500C6 6 5.500 4.500 6 3.500z" fill="#fff" stroke="#5a6090" stroke-width="1.100" stroke-linejoin="round"/><path d="M6.200 4.500C8 6 11 6.800 13.500 6.500C12 8.800 9.500 9 7.500 7.300C6.500 6.300 6.100 5.300 6.200 4.500z" fill="#4c5488"/><path d="M13.300 10L17 17H9.800z" fill="#5a6090"/><path d="M13.300 10l1.200 2.300h-2.400z" fill="#a8acc8"/></svg>
<div class="a" style="left:4px;top:586px;width:22px;height:1px;background:#d6d6d6"></div>
<!-- eyedropper -->
<svg style="left:6px;top:596px" width="18" height="17" viewBox="0 0 18 17"><rect x="1" y="8" width="8" height="8" fill="#f07c00"/><rect x="1" y="8" width="2.500" height="2.500" fill="#d86000"/><rect x="6.500" y="13.500" width="2.500" height="2.500" fill="#d86000"/><rect x="3.500" y="11" width="2.500" height="3" fill="#ffd0a0"/><path d="M5.500 12.500l1-3L11 5l2 2-4.500 4.500z" fill="#8c8ca8" stroke="#3c3c5c" stroke-width="0.800"/><path d="M10 4l4 4" stroke="#1c1c2c" stroke-width="2.400" stroke-linecap="round"/><path d="M12 6l3.300-3.300" stroke="#2c2c44" stroke-width="3.400" stroke-linecap="round"/></svg>
<svg class="fly" style="left:20px;top:609px" width="5" height="5" viewBox="0 0 5 5"><path d="M5 0v5H0z" fill="#000"/></svg>
<div class="a" style="left:4px;top:622px;width:22px;height:1px;background:#d6d6d6"></div>
<!-- plus -->
<svg style="left:6px;top:638px" width="18" height="18" viewBox="0 0 18 18"><circle cx="9" cy="9" r="8" fill="#fbfbfb" stroke="#c2c2c2" stroke-width="1.200"/><path d="M9 3.200v11.600M3.200 9h11.600" stroke="#bdbdc0" stroke-width="2"/></svg>
<!-- chevrons -->
<svg style="left:9px;top:676px" width="12" height="9" viewBox="0 0 12 9"><path d="M0.800 0.500L5 4.500L0.800 8.500M6.300 0.500L10.500 4.500L6.300 8.500" fill="none" stroke="#aab4c8" stroke-width="1.200"/></svg>
<!-- docker -->
<div class="a" style="left:1076px;top:143px;width:251px;height:551px;background:#f7f7f7"></div>
<div class="a" style="left:1076px;top:143px;width:272px;height:19px;background:#f0f0f0"></div>
<div class="t" id="dtitle" style="left:1078px;top:146px;letter-spacing:-0.12px">Właściwości tekstu</div>
<svg style="left:1316px;top:148px" width="9" height="8" viewBox="0 0 9 8"><path d="M0 0L4.500 4L0 8zM4.500 0L9 4L4.500 8z" fill="#c6c8cc"/></svg>
<svg style="left:1333px;top:148px" width="9" height="8" viewBox="0 0 9 8"><path d="M0.700 0.300L8.300 7.700M8.300 0.300L0.700 7.700" stroke="#c2c4c8" stroke-width="1.300"/></svg>
<div class="a" style="left:1076px;top:162px;width:251px;height:1px;background:#c4c4c4"></div>
<!-- tab icons row -->
<div class="a" style="left:1076px;top:163px;width:251px;height:25px;background:#f0f0f0"></div>
<div class="a" style="left:1077px;top:164px;width:23px;height:23px;background:#fff;border:1px solid #a4a4a4"></div>
<svg style="left:1081px;top:167px" width="15" height="16" viewBox="0 0 15 16"><path d="M1 15L5.800 1h3.400L14 15h-3.300l-1-3.200H5.300l-1 3.200z" fill="#e8e8f2" stroke="#5a5a7c" stroke-width="1.100" stroke-linejoin="round"/><path d="M6 9h3L7.500 4.300z" fill="#fff" stroke="#5a5a7c" stroke-width="0.900"/></svg>
<svg style="left:1106px;top:168px" width="13" height="13" viewBox="0 0 13 13"><path d="M0.500 1.500h12M0.500 3.500h12M0.500 5.500h12M0.500 7.500h12M0.500 9.500h12M0.500 11.500h4" stroke="#9c9cb4" stroke-width="1"/></svg>
<svg style="left:1130px;top:167px" width="16" height="16" viewBox="0 0 16 16"><rect x="2" y="2" width="12" height="11.500" fill="#fff" stroke="#5a5a7c" stroke-width="1.200"/><rect x="2.600" y="8" width="10.800" height="5" fill="#dcdce8"/><g fill="#4c4c6c"><rect x="0.500" y="0.800" width="2.500" height="2.500"/><rect x="6.800" y="0.800" width="2.500" height="2"/><rect x="13" y="0.800" width="2.500" height="2.500"/><rect x="0.500" y="12.500" width="2.500" height="2.500"/><rect x="6.800" y="12.800" width="2.500" height="2"/><rect x="13" y="12.500" width="2.500" height="2.500"/></g></svg>
<!-- header right icons -->
<svg style="left:1276px;top:168px" width="16" height="14" viewBox="0 0 16 14"><path d="M0.600 13.400V2.500h1.500V0.600h5v1.900h2V0.600h4.500v1.900h1.800v10.900z" fill="#fff" stroke="#6a6a8c" stroke-width="1.100"/><path d="M0.600 3.200h14.800" stroke="#9c9cb4" stroke-width="1"/><path d="M8 5v3.500h-2l2.700 3 2.700-3h-2V5z" fill="#2c2c44"/></svg>
<div class="sep" style="left:1299px;top:165px;height:21px;background:#dcdcdc"></div>
<svg style="left:1306px;top:168px" width="17" height="15" viewBox="0 0 17 15"><rect x="0.600" y="0.600" width="10" height="8.500" fill="#fff" stroke="#6a6a8c" stroke-width="1.200"/><ellipse cx="10.500" cy="10" rx="5.800" ry="4" fill="#8c8c9c"/><ellipse cx="10.500" cy="9" rx="5.800" ry="3" fill="#a8a8b8"/></svg>
<div class="a" style="left:1076px;top:188px;width:234px;height:2px;background:#a4a4a4"></div>
<!-- Znak header -->
<svg style="left:1082px;top:196px" width="8" height="10" viewBox="0 0 8 10"><path d="M0.700 4.300L4 1L7.300 4.300M0.700 9L4 5.700L7.300 9" fill="none" stroke="#555" stroke-width="1.500"/></svg>
<div class="t" style="left:1100px;top:194px;font-weight:bold">Znak</div>
<!-- font dropdown -->
<div class="dd" style="left:1080px;top:217px;width:226px;height:23px;border-color:#a2a2b0"></div>
<svg style="left:1085px;top:222px" width="13" height="14" viewBox="0 0 13 14"><ellipse cx="6.500" cy="7" rx="5.200" ry="6.500" transform="rotate(20 6.500 7)" fill="url(#og)"/><ellipse cx="6.600" cy="6.900" rx="3" ry="5.500" transform="rotate(26 6.600 6.900)" fill="#fff"/></svg>
<div class="t" style="left:1104px;top:222px">Arial</div>
<svg style="left:1294px;top:226px" width="8" height="6" viewBox="0 0 8 6"><path d="M0.600 0.800L4 4.300L7.400 0.800" fill="none" stroke="#444" stroke-width="1.700"/></svg>
<!-- style / size -->
<div class="dd gr" style="left:1080px;top:245px;width:141px;height:23px"></div>
<div class="t" style="left:1084px;top:250px">Normalna</div>
<svg style="left:1209px;top:254px" width="8" height="6" viewBox="0 0 8 6"><path d="M0.600 0.800L4 4.300L7.400 0.800" fill="none" stroke="#444" stroke-width="1.700"/></svg>
<div class="dd" style="left:1226px;top:245px;width:80px;height:23px;border-color:#a2a2b0"></div>
<div class="t" style="left:1233px;top:250px">12 pkt</div>
<svg style="left:1294px;top:254px" width="8" height="6" viewBox="0 0 8 6"><path d="M0.600 0.800L4 4.300L7.400 0.800" fill="none" stroke="#444" stroke-width="1.700"/></svg>
<div class="a hl" style="left:1081px;top:274px;width:224px"></div>
<!-- kerning row -->
<svg style="left:1079px;top:284px" width="16" height="16" viewBox="0 0 16 16"><path d="M0.500 12L4 3h1.600L9 12H7.400l-.8-2.300H2.900L2.100 12zM3.400 8.400h2.700L4.800 4.600z" fill="#3c3c5c"/><path d="M6.800 3h1.600l2.600 7.300L13.600 3h1.600l-3.500 9h-1.500z" fill="#3c3c5c"/><path d="M1 1.200h6M9 14.500h6" stroke="#3c3c5c" stroke-width="1"/><path d="M0.300 1.200l2-1.200v2.400zM15.800 14.500l-2-1.200v2.400z" fill="#3c3c5c"/></svg>
<div class="a" style="left:1099px;top:281px;width:122px;height:23px;background:#f2f2f2;border:1px solid #dedede"></div>
<div class="a" style="left:1101px;top:283px;width:101px;height:19px;background:#ececec"></div>
<div class="a" style="left:1202px;top:283px;width:17px;height:19px;background:#f0f0f0;border:1px solid #dcdcdc"></div>
<div class="a" style="left:1202px;top:292px;width:17px;height:1px;background:#dcdcdc"></div>
<svg style="left:1208px;top:286px" width="5" height="3" viewBox="0 0 5 3"><path d="M0 3h5L2.500 0z" fill="#808080"/></svg>
<svg style="left:1208px;top:296px" width="5" height="3" viewBox="0 0 5 3"><path d="M0 0h5L2.500 3z" fill="#808080"/></svg>
<svg style="left:1286px;top:284px" width="19" height="18" viewBox="0 0 19 18"><path d="M3.500 0.800h2.800v7.200c0 1.500 1 2.400 2.400 2.400s2.400-.9 2.400-2.400V0.800h2.800v7.400c0 3-2 4.800-5.200 4.800S3.500 11.200 3.500 8.200z" fill="#fff" stroke="#4c4c6c" stroke-width="1"/><path d="M1 15.500h13.500" stroke="#4c4c6c" stroke-width="1.200"/><path d="M18.500 13v5h-5z" fill="#000"/></svg>
<!-- fill row -->
<svg style="left:1078px;top:311px" width="18" height="17" viewBox="0 0 18 17"><path d="M4.500 11.500L8 1.500h2l3.500 10h-2l-.8-2.400H7.300l-.8 2.400z" fill="#f4f4f8" stroke="#8c8ca8" stroke-width="0.900"/><path d="M7.800 7.500h2.400L9 4z" fill="#f7f7f7" stroke="#8c8ca8" stroke-width="0.700"/><rect x="1" y="13.500" width="4" height="3" fill="#e01818"/><rect x="5" y="13.500" width="4" height="3" fill="#3c6cc8"/><rect x="9" y="13.500" width="4" height="3" fill="#58b038"/><rect x="13" y="13.500" width="4" height="3" fill="#3c3c5c"/></svg>
<div class="dd gr" style="left:1099px;top:309px;width:122px;height:23px"></div>
<div class="t" id="wyp" style="left:1103px;top:314px;letter-spacing:-0.1px">Wypełnienie jed...</div>
<svg style="left:1209px;top:318px" width="8" height="6" viewBox="0 0 8 6"><path d="M0.600 0.800L4 4.300L7.400 0.800" fill="none" stroke="#444" stroke-width="1.700"/></svg>
<div class="dd" style="left:1226px;top:309px;width:52px;height:23px;border-color:#ababab"></div>
<div class="a" style="left:1229px;top:312px;width:29px;height:16px;background:#141614"></div>
<div class="a" style="left:1261px;top:310px;width:1px;height:21px;background:#c8c8c8"></div>
<div class="a" style="left:1262px;top:310px;width:15px;height:21px;background:#f9f9f9"></div>
<svg style="left:1266px;top:319px" width="7" height="4" viewBox="0 0 7 4"><path d="M0 0h7L3.500 4z" fill="#000"/></svg>
<svg class="dots" style="left:1289px;top:323px" width="10" height="2"><g fill="#30305c"><rect x="0" width="2" height="2"/><rect x="4" width="2" height="2"/><rect x="8" width="2" height="2"/></g></svg>
<!-- background fill row -->
<div class="a" style="left:1079px;top:342px;width:14px;height:12px;background:#f0e428"></div>
<div class="t" style="left:1079px;top:341px;font-weight:bold;color:#4c4c4c;font-size:12px;letter-spacing:-0.300px">ab</div>
<svg style="left:1092px;top:341px" width="4" height="15" viewBox="0 0 4 15"><path d="M2 1v13M0.300 0.500C1 0.500 2 0.800 2 1.500C2 0.800 3 0.500 3.700 0.500M0.300 14.500C1 14.500 2 14.200 2 13.500C2 14.200 3 14.500 3.700 14.500" stroke="#555" stroke-width="0.800" fill="none"/></svg>
<div class="dd gr" style="left:1099px;top:337px;width:122px;height:23px"></div>
<div class="t" id="bezw" style="left:1103px;top:342px;letter-spacing:-0.2px">Bez wypełnienia</div>
<svg style="left:1209px;top:346px" width="8" height="6" viewBox="0 0 8 6"><path d="M0.600 0.800L4 4.300L7.400 0.800" fill="none" stroke="#444" stroke-width="1.700"/></svg>
<div class="dd" style="left:1226px;top:337px;width:52px;height:23px;border-color:#ababab"></div>
<div class="a" style="left:1229px;top:340px;width:29px;height:16px;background:#000"></div>
<div class="a" style="left:1261px;top:338px;width:1px;height:21px;background:#c8c8c8"></div>
<div class="a" style="left:1262px;top:338px;width:15px;height:21px;background:#f9f9f9"></div>
<svg style="left:1266px;top:347px" width="7" height="4" viewBox="0 0 7 4"><path d="M0 0h7L3.500 4z" fill="#000"/></svg>
<svg class="dots" style="left:1289px;top:351px" width="10" height="2"><g fill="#30305c"><rect x="0" width="2" height="2"/><rect x="4" width="2" height="2"/><rect x="8" width="2" height="2"/></g></svg>
<!-- outline row -->
<svg style="left:1079px;top:367px" width="16" height="18" viewBox="0 0 16 18"><path d="M1.500 16.500L6.300 1.500h3.400l4.800 15h-3.200l-1-3.500H5.700l-1 3.500z" fill="#fff" stroke="#2c2c44" stroke-width="1.700" stroke-linejoin="round"/><path d="M6.500 10.200h3L8 5.500z" fill="#f7f7f7" stroke="#2c2c44" stroke-width="1.300" stroke-linejoin="round"/></svg>
<div class="dd" style="left:1099px;top:365px;width:122px;height:23px;border-color:#a2a2b0"></div>
<div class="a" style="left:1105px;top:369px;width:24px;height:15px;background:#3399ff"></div>
<div class="t" style="left:1106px;top:370px;color:#fff;letter-spacing:-0.550px">Brak</div>
<svg style="left:1209px;top:374px" width="8" height="6" viewBox="0 0 8 6"><path d="M0.600 0.800L4 4.300L7.400 0.800" fill="none" stroke="#444" stroke-width="1.700"/></svg>
<div class="dd" style="left:1226px;top:365px;width:52px;height:23px;border-color:#ababab"></div>
<svg style="left:1229px;top:369px" width="15" height="15" viewBox="0 0 15 15"><path d="M0.500 0.500L14 14M14 0.500L0.500 14" stroke="#222" stroke-width="1"/></svg>
<div class="a gr" style="left:1260px;top:365px;width:18px;height:23px;border:1px solid #a0a0a0;background:linear-gradient(#ececec,#dcdcdc)"></div>
<svg style="left:1265px;top:374px" width="8" height="6" viewBox="0 0 8 6"><path d="M0.600 0.800L4 4.300L7.400 0.800" fill="none" stroke="#444" stroke-width="1.700"/></svg>
<svg class="dots" style="left:1289px;top:379px" width="10" height="2"><g fill="#30305c"><rect x="0" width="2" height="2"/><rect x="4" width="2" height="2"/><rect x="8" width="2" height="2"/></g></svg>
<div class="a hl" style="left:1081px;top:394px;width:224px"></div>
<!-- icon grid row A -->
<div class="t ic" style="left:1083px;top:404px;font-family:'Liberation Mono',monospace;font-size:12px;color:#3c3c5c;letter-spacing:0px">ab</div>
<svg class="fly" style="left:1096px;top:417px" width="5" height="5" viewBox="0 0 5 5"><path d="M5 0v5H0z" fill="#000"/></svg>
<div class="t ic" style="left:1134px;top:402px;font-size:17px;line-height:20px;height:20px;color:#3c3c5c;font-weight:bold;transform:scaleX(0.92);transform-origin:0 0">X</div>
<div class="t ic" style="left:1146px;top:403px;font-size:8px;line-height:9px;height:9px;color:#8c8ca8">2</div>
<svg class="fly" style="left:1147px;top:417px" width="5" height="5" viewBox="0 0 5 5"><path d="M5 0v5H0z" fill="#000"/></svg>
<svg style="left:1186px;top:405px" width="14" height="14" viewBox="0 0 14 14"><circle cx="7" cy="7" r="6.300" fill="none" stroke="#3c3c5c" stroke-width="1.100"/><path d="M5.300 4.800L7.300 3.500V10.500M5.300 10.500h4" stroke="#3c3c5c" stroke-width="1.100" fill="none"/></svg>
<svg class="fly" style="left:1198px;top:417px" width="5" height="5" viewBox="0 0 5 5"><path d="M5 0v5H0z" fill="#000"/></svg>
<div class="sep" style="left:1276px;top:402px;height:21px;background:#dcdcdc"></div>
<div class="t ic" style="left:1287px;top:403px;font-size:12px;color:#3c3c5c;font-weight:bold;letter-spacing:-0.800px">AB</div>
<svg style="left:1287px;top:414px" width="15" height="5" viewBox="0 0 15 5"><path d="M1 2.500h13" stroke="#3c3c5c" stroke-width="1"/><path d="M0 2.500l2.500-2v4zM15 2.500l-2.500-2v4z" fill="#3c3c5c"/></svg>
<div class="a hl" style="left:1081px;top:430px;width:224px"></div>
<!-- row B -->
<div class="t ic" style="left:1083px;top:441px;font-size:13px;color:#2c2c44;letter-spacing:-1.200px">123</div>
<svg class="fly" style="left:1096px;top:453px" width="5" height="5" viewBox="0 0 5 5"><path d="M5 0v5H0z" fill="#000"/></svg>
<div class="t ic" style="left:1134px;top:441px;font-size:13px;color:#2c2c44;letter-spacing:-0.500px">1/4</div>
<svg class="fly" style="left:1147px;top:453px" width="5" height="5" viewBox="0 0 5 5"><path d="M5 0v5H0z" fill="#000"/></svg>
<div class="t ic" style="left:1184px;top:438px;font-size:20px;line-height:20px;height:20px;color:#a4a4a4;font-weight:bold">1</div>
<div class="t ic" style="left:1194px;top:439px;font-size:8px;line-height:9px;height:9px;color:#a4a4a4;font-weight:bold">st</div>
<div class="t ic" style="left:1238px;top:438px;font-size:20px;line-height:20px;height:20px;color:#a4a4a4;font-weight:bold;transform:scaleX(0.95);transform-origin:0 0">0</div>
<svg style="left:1238px;top:441px" width="12" height="15" viewBox="0 0 12 15"><path d="M9.800 1L2 14" stroke="#a4a4a4" stroke-width="1.500"/></svg>
<svg style="left:1286px;top:440px" width="16" height="15" viewBox="0 0 16 15"><path d="M6 0.500C3 0 1 1.500 1.200 3.500C1.400 5.500 3.500 5.500 4 4.500C3 4.800 2.500 4 2.800 3C3.200 2 5 1.500 6.500 2.800C4.500 4.500 4 7.500 6 9.500C8 11.500 12 10.800 13 9C14 11 13.500 13 12 14.500C15.500 13 16.500 8.500 14.500 5.500C12.500 2.800 9 2.500 7 3.200C7 2 6.800 1 6 0.500z" fill="#a0a0a0"/><path d="M7.500 5C9.500 4 12.500 5 13 7.500C11.500 6.500 9 6.800 8 8.500C7 7.500 7 6 7.500 5z" fill="#c8c8b8"/></svg>
<!-- row C -->
<div class="t ic" style="left:1084px;top:465px;font-size:20px;line-height:22px;height:22px;color:#3c3c5c;font-weight:bold;transform:scaleX(0.88);transform-origin:0 0">A</div>
<svg class="fly" style="left:1096px;top:481px" width="5" height="5" viewBox="0 0 5 5"><path d="M5 0v5H0z" fill="#000"/></svg>
<div class="t ic" style="left:1138px;top:466px;font-size:18px;line-height:22px;height:22px;color:#3c3c5c;font-weight:bold;transform:scaleX(0.75);transform-origin:0 0">S</div>
<svg class="fly" style="left:1147px;top:481px" width="5" height="5" viewBox="0 0 5 5"><path d="M5 0v5H0z" fill="#000"/></svg>
<div class="t ic" style="left:1185px;top:465px;font-family:'Liberation Serif',serif;font-style:italic;font-weight:bold;font-size:20px;line-height:22px;height:22px;color:#a4a4a4">A</div>
<svg style="left:1184px;top:476px" width="8" height="7" viewBox="0 0 8 7"><path d="M0.500 3C1 5.500 4 6.500 7 4" fill="none" stroke="#a4a4a4" stroke-width="1.500"/></svg>
<div class="t ic" style="left:1236px;top:465px;font-size:16px;line-height:18px;height:18px;color:#3c3c5c;letter-spacing:-0.300px">gg</div>
<div class="t ic" style="left:1286px;top:469px;font-size:12px;color:#a4a4a4;font-style:italic;letter-spacing:-0.800px">A<span style="font-size:9px;font-weight:bold">@</span></div>
<!-- row D -->
<div class="a" style="left:1080px;top:493px;width:23px;height:23px;background:#fff;border:1px solid #a4a4a4"></div>
<div class="t ic" style="left:1085px;top:493px;font-size:19px;line-height:22px;height:22px;color:#3c3c5c;font-weight:bold;letter-spacing:-1.500px">fi</div>
<div class="t ic" style="left:1134px;top:494px;font-size:18px;line-height:22px;height:22px;color:#4c4c6c;letter-spacing:-0.500px">ct</div>
<svg style="left:1140px;top:496px" width="8" height="5" viewBox="0 0 8 5"><path d="M0.500 4.500C1 1 6 0 6.500 3.500" fill="none" stroke="#4c4c6c" stroke-width="1.200"/></svg>
<div class="t ic" style="left:1185px;top:494px;font-size:18px;line-height:22px;height:22px;color:#a4a4a4;letter-spacing:-0.500px">st</div>
<svg style="left:1191px;top:496px" width="8" height="5" viewBox="0 0 8 5"><path d="M0.500 4.500C1 1 6 0 6.500 3.500" fill="none" stroke="#a4a4a4" stroke-width="1.200"/></svg>
<div class="t ic" style="left:1237px;top:493px;font-family:'Liberation Serif',serif;font-weight:bold;font-size:20px;line-height:22px;height:22px;color:#a4a4a4;letter-spacing:-1px">fs</div>
<div class="t ic" style="left:1289px;top:493px;font-family:'Liberation Serif',serif;font-weight:bold;font-size:20px;line-height:22px;height:22px;color:#a4a4a4">f</div>
<!-- expand bar -->
<div class="a" style="left:1076px;top:523px;width:235px;height:15px;background:#ececec"></div>
<svg style="left:1189px;top:528px" width="8" height="4" viewBox="0 0 8 4"><path d="M0 0h8L4 4z" fill="#000"/></svg>
<div class="a" style="left:1076px;top:544px;width:234px;height:2px;background:#a4a4a4"></div>
<!-- Akapit header -->
<svg style="left:1082px;top:551px" width="8" height="10" viewBox="0 0 8 10"><path d="M0.700 4.300L4 1L7.300 4.300M0.700 9L4 5.700L7.300 9" fill="none" stroke="#555" stroke-width="1.500"/></svg>
<div class="t" style="left:1100px;top:550px;font-weight:bold;letter-spacing:-0.200px">Akapit</div>
<!-- align row -->
<div class="a" style="left:1080px;top:573px;width:23px;height:23px;background:#fff;border:1px solid #a4a4a4"></div>
<svg style="left:1084px;top:576px" width="15" height="14" viewBox="0 0 15 14"><path d="M5.500 2.500h8M1.500 5h12M1.500 7.500h12M1.500 10h12M1.500 12.500h12" stroke="#1c1c3c" stroke-width="1.100"/><path d="M0.500 0.500l4 4M4.500 0.500l-4 4" stroke="#e01010" stroke-width="1.300"/></svg>
<svg style="left:1119px;top:578px" width="12" height="11" viewBox="0 0 12 11"><path d="M0 0.500h12M0 2.500h7M0 4.500h11M0 6.500h7M0 8.500h12M0 10.500h6" stroke="#7c7ca0" stroke-width="1"/></svg>
<svg style="left:1153px;top:578px" width="12" height="11" viewBox="0 0 12 11"><path d="M0 0.500h12M2.500 2.500h7M0.500 4.500h11M2.500 6.500h7M0 8.500h12M3 10.500h6" stroke="#7c7ca0" stroke-width="1"/></svg>
<svg style="left:1187px;top:578px" width="12" height="11" viewBox="0 0 12 11"><path d="M0 0.500h12M5 2.500h7M1 4.500h11M5 6.500h7M0 8.500h12M6 10.500h6" stroke="#7c7ca0" stroke-width="1"/></svg>
<svg style="left:1221px;top:578px" width="12" height="11" viewBox="0 0 12 11"><path d="M0 0.500h12M0 2.500h12M0 4.500h12M0 6.500h12M0 8.500h12M0 10.500h5" stroke="#7c7ca0" stroke-width="1"/></svg>
<svg style="left:1255px;top:578px" width="12" height="11" viewBox="0 0 12 11"><path d="M0 0.500h12M0 2.500h12M0 4.500h12M0 6.500h12M0 8.500h12M0 10.500h12" stroke="#7c7ca0" stroke-width="1"/></svg>
<svg class="dots" style="left:1289px;top:587px" width="10" height="2"><g fill="#30305c"><rect x="0" width="2" height="2"/><rect x="4" width="2" height="2"/><rect x="8" width="2" height="2"/></g></svg>
<div class="a hl" style="left:1081px;top:602px;width:224px"></div>
<!-- spinner row 1 -->
<svg style="left:1079px;top:614px" width="15" height="12" viewBox="0 0 15 12"><path d="M0 6h4.500" stroke="#3c3c5c" stroke-width="1"/><path d="M3.500 3.800L6.500 6L3.500 8.200z" fill="#3c3c5c"/><path d="M7.500 0v12" stroke="#3c3c5c" stroke-width="1"/><path d="M9 1h6M9 3.500h6M9 6h4M9 8.500h6M9 11h6" stroke="#5a5a7c" stroke-width="1.300"/></svg>
<div class="inp" style="left:1099px;top:609px;width:92px;height:23px;border-color:#ababab"></div>
<div class="t" style="left:1102px;top:614px">0,0 mm</div>
<div class="a spb" style="left:1172px;top:611px;width:17px;height:19px"></div>
<div class="a" style="left:1172px;top:620px;width:17px;height:1px;background:#c4c4c4"></div>
<svg style="left:1178px;top:614px" width="5" height="3" viewBox="0 0 5 3"><path d="M0 3h5L2.500 0z" fill="#000"/></svg>
<svg style="left:1178px;top:624px" width="5" height="3" viewBox="0 0 5 3"><path d="M0 0h5L2.500 3z" fill="#000"/></svg>
<svg style="left:1196px;top:614px" width="15" height="12" viewBox="0 0 15 12"><path d="M0 1.500h3.500" stroke="#3c3c5c" stroke-width="1"/><path d="M2.500 0L5 1.500L2.500 3z" fill="#3c3c5c"/><path d="M6.500 1h8M4 3.500h10.500M4 6h8M4 8.500h10.500M4 11h10.500" stroke="#5a5a7c" stroke-width="1.200"/></svg>
<div class="inp" style="left:1215px;top:609px;width:91px;height:23px;border-color:#ababab"></div>
<div class="t" style="left:1218px;top:614px">0,0 mm</div>
<div class="a spb" style="left:1287px;top:611px;width:17px;height:19px"></div>
<div class="a" style="left:1287px;top:620px;width:17px;height:1px;background:#c4c4c4"></div>
<svg style="left:1293px;top:614px" width="5" height="3" viewBox="0 0 5 3"><path d="M0 3h5L2.500 0z" fill="#000"/></svg>
<svg style="left:1293px;top:624px" width="5" height="3" viewBox="0 0 5 3"><path d="M0 0h5L2.500 3z" fill="#000"/></svg>
<!-- spinner row 2 -->
<svg style="left:1079px;top:643px" width="15" height="12" viewBox="0 0 15 12"><path d="M0 1h8M0 3.500h8M0 6h6M0 8.500h8M0 11h8" stroke="#5a5a7c" stroke-width="1.300"/><path d="M9.500 0v12" stroke="#3c3c5c" stroke-width="1"/><path d="M10 6h4.500" stroke="#3c3c5c" stroke-width="1"/></svg>
<div class="inp" style="left:1099px;top:637px;width:92px;height:23px;border-color:#ababab"></div>
<div class="t" style="left:1102px;top:642px">0,0 mm</div>
<div class="a spb" style="left:1172px;top:639px;width:17px;height:19px"></div>
<div class="a" style="left:1172px;top:648px;width:17px;height:1px;background:#c4c4c4"></div>
<svg style="left:1178px;top:642px" width="5" height="3" viewBox="0 0 5 3"><path d="M0 3h5L2.500 0z" fill="#000"/></svg>
<svg style="left:1178px;top:652px" width="5" height="3" viewBox="0 0 5 3"><path d="M0 0h5L2.500 3z" fill="#000"/></svg>
<div class="a hl" style="left:1081px;top:666px;width:224px"></div>
<!-- spinner row 3 (clipped) -->
<div class="a" style="left:1077px;top:670px;width:234px;height:24px;overflow:hidden">
<svg style="left:2px;top:7px" width="16" height="15" viewBox="0 0 16 15"><path d="M0.500 2h4.500M3 0.300v3.400" stroke="#2c2c44" stroke-width="1.100"/><rect x="6" y="0" width="9" height="3.500" fill="#8c8ca8"/><path d="M6 5.500h8M6 7.500h9M6 9.500h8M6 11.500h5.500M6 13.500h9" stroke="#5a5a7c" stroke-width="1"/></svg>
<div class="inp" style="left:22px;top:3px;width:92px;height:23px;border-color:#ababab"></div>
<div class="t" style="left:25px;top:8px">100,0 %</div>
<div class="a spb" style="left:95px;top:5px;width:17px;height:19px"></div>
<div class="a" style="left:95px;top:14px;width:17px;height:1px;background:#c4c4c4"></div>
<svg style="left:101px;top:8px" width="5" height="3" viewBox="0 0 5 3"><path d="M0 3h5L2.500 0z" fill="#000"/></svg>
<svg style="left:101px;top:18px" width="5" height="3" viewBox="0 0 5 3"><path d="M0 0h5L2.500 3z" fill="#000"/></svg>
<svg style="left:119px;top:8px" width="15" height="13" viewBox="0 0 15 13"><path d="M2 1v11" stroke="#3c3c5c" stroke-width="1"/><path d="M2 0L0.300 2.500h3.400zM2 13L0.300 10.500h3.400z" fill="#3c3c5c"/><path d="M5.500 1.500h9M5.500 4.500h9M5.500 7.500h7M5.500 10.500h9" stroke="#5a5a7c" stroke-width="1.300"/></svg>
<div class="inp" style="left:138px;top:3px;width:91px;height:23px;border-color:#ababab"></div>
<div class="t" style="left:141px;top:8px">100,0 %</div>
<div class="a spb" style="left:210px;top:5px;width:17px;height:19px"></div>
<div class="a" style="left:210px;top:14px;width:17px;height:1px;background:#c4c4c4"></div>
<svg style="left:216px;top:8px" width="5" height="3" viewBox="0 0 5 3"><path d="M0 3h5L2.500 0z" fill="#000"/></svg>
<svg style="left:216px;top:18px" width="5" height="3" viewBox="0 0 5 3"><path d="M0 0h5L2.500 3z" fill="#000"/></svg>
</div>
<!-- docker scrollbar -->
<div class="a" style="left:1311px;top:188px;width:15px;height:506px;background:#eeeeee"></div>
<svg style="left:1315px;top:194px" width="8" height="6" viewBox="0 0 8 6"><path d="M0.700 4.800L4 1.500L7.300 4.800" fill="none" stroke="#444" stroke-width="1.800"/></svg>
<div class="a" style="left:1311px;top:205px;width:15px;height:330px;background:#cdcdcd"></div>
<svg style="left:1315px;top:683px" width="8" height="6" viewBox="0 0 8 6"><path d="M0.700 1.200L4 4.500L7.300 1.200" fill="none" stroke="#444" stroke-width="1.800"/></svg>
<!-- side tabs -->
<div class="a" style="left:1327px;top:163px;width:1px;height:531px;background:#1ea2f4"></div>
<div class="a" style="left:1328px;top:163px;width:20px;height:313px;background:#dcdcdc"></div>
<div class="a" style="left:1328px;top:476px;width:20px;height:143px;background:#cfe3fb"></div>
<div class="a" style="left:1328px;top:619px;width:20px;height:75px;background:#ececec"></div>
<div class="a" style="left:1328px;top:273px;width:20px;height:1px;background:#eeeeee"></div>
<div class="a" style="left:1328px;top:424px;width:20px;height:1px;background:#eeeeee"></div>
<div class="a" style="left:1328px;top:450px;width:20px;height:1px;background:#eeeeee"></div>
<svg style="left:1330px;top:165px" width="16" height="16" viewBox="0 0 16 16"><path d="M1.500 1.500V12L4.300 9.800L6.300 14.500L8.300 13.600L6.300 9L9.800 8.800z" fill="#fff" stroke="#3c3c5c" stroke-width="1.100" stroke-linejoin="round"/><path d="M9 2.500C10 0.500 14 0.500 14 3C14 4.800 12 4.800 12 6.800" fill="none" stroke="#3c3c5c" stroke-width="1.400"/><path d="M8.500 0.800l3.500 0M14.500 1l-1 3" stroke="#3c3c5c" stroke-width="1" fill="none"/></svg>
<div class="t vt" id="vt1" style="left:1345px;top:187px;transform:rotate(90deg);transform-origin:0 0;letter-spacing:0px">Podpowiedzi</div>
<svg style="left:1329px;top:278px" width="16" height="15" viewBox="0 0 16 15"><path d="M5.500 0.500L1 4.500L4.500 8.500L8 5z" fill="#fff" stroke="#9c9cb4" stroke-width="0.900"/><path d="M2.500 4.500h4L4.500 7z" fill="#f0a020"/><circle cx="1" cy="4.500" r="0.800" fill="#111"/><circle cx="7.500" cy="1" r="0.800" fill="#111"/><rect x="6.500" y="4" width="8.500" height="9.500" fill="#c4c4e0" stroke="#8c8ca8" stroke-width="1"/><g fill="#8c8ca8"><rect x="5.500" y="3" width="2.500" height="2.500"/><rect x="13" y="3" width="2.500" height="2.500"/><rect x="5.500" y="12" width="2.500" height="2.500"/><rect x="13" y="12" width="2.500" height="2.500"/></g><path d="M8 5.500l5.500 6.500M13.500 5.500L8 12" stroke="#fff" stroke-width="1" stroke-dasharray="1 1"/></svg>
<div class="t vt" id="vt2" style="left:1345px;top:298px;transform:rotate(90deg);transform-origin:0 0;letter-spacing:0px">Właściwości obiektu</div>
<svg style="left:1330px;top:429px" width="16" height="16" viewBox="0 0 16 16"><path d="M2.500 3v11M8.500 5v8" stroke="#3c3c5c" stroke-width="1" stroke-dasharray="1 1"/><circle cx="2.500" cy="2" r="1.500" fill="#fff" stroke="#3c3c5c" stroke-width="0.900"/><path d="M4 2h4" stroke="#3c3c5c" stroke-width="1"/><rect x="8" y="0.500" width="5" height="3.500" fill="#dcdce8" stroke="#4c4c6c" stroke-width="0.900"/><path d="M3 8.500h3M9 8h2M9 12h2" stroke="#3c3c5c" stroke-width="1" stroke-dasharray="1 1"/><rect x="11" y="6.500" width="4" height="3" fill="#dcdce8" stroke="#4c4c6c" stroke-width="0.900"/><rect x="11" y="10.500" width="4" height="3" fill="#dcdce8" stroke="#4c4c6c" stroke-width="0.900"/></svg>
<svg style="left:1330px;top:455px" width="16" height="16" viewBox="0 0 16 16"><path d="M3.500 2v13" stroke="#b0b4d8" stroke-width="1.500" stroke-dasharray="1.500 1.500"/><path d="M2 3.500h13" stroke="#b0b4d8" stroke-width="1.500" stroke-dasharray="1.500 1.500"/><path d="M2.500 3.500l1.500-1.500" stroke="#8c90b8" stroke-width="1.200"/></svg>
<svg style="left:1330px;top:481px" width="16" height="16" viewBox="0 0 16 16"><path d="M2.500 15L6.500 3h3L13.500 15h-3l-.8-2.800H6.300L5.500 15z" fill="#f4f4f8" stroke="#5a5a7c" stroke-width="1.100" stroke-linejoin="round"/><path d="M6.800 9.800h2.400L8 5.500z" fill="#fff" stroke="#5a5a7c" stroke-width="0.800"/><path d="M0.500 2.500h3M2.500 1l-2 1.500 2 1.500M12.500 2.500h3M13.500 1l2 1.500-2 1.500" stroke="#1c1c2c" stroke-width="0.900" fill="none"/></svg>
<div class="t vt" id="vt3" style="left:1345px;top:502px;transform:rotate(90deg);transform-origin:0 0;letter-spacing:-0.12px">Właściwości tekstu</div>
<svg style="left:1330px;top:636px" width="18" height="18" viewBox="0 0 18 18"><circle cx="8.500" cy="9" r="8" fill="#f2f2f2" stroke="#bcbcbc" stroke-width="1.200"/><path d="M8.500 3.200v11.600M2.700 9h11.600" stroke="#bdbdc0" stroke-width="2"/></svg>
<!-- color palette -->
<div class="a" style="left:1348px;top:143px;width:18px;height:551px;background:#f9f9f9"></div>
<svg style="left:1350px;top:136px" width="14" height="14" viewBox="0 0 14 14"><path d="M1 13l1-3L7 5l2 2-5 5z" fill="#d6d6d6"/><path d="M6.500 4l3.500 3.500" stroke="#c4c4c4" stroke-width="2.600" stroke-linecap="round"/><path d="M8.500 5.500l3.200-3.200" stroke="#c8c8c8" stroke-width="3.600" stroke-linecap="round"/></svg>
<svg style="left:1352px;top:154px" width="10" height="8" viewBox="0 0 10 8"><path d="M0.700 6.500L5 1.500L9.300 6.500" fill="none" stroke="#d4d8e0" stroke-width="1.900"/></svg>
<svg style="left:1348px;top:167px" width="18" height="17" viewBox="0 0 18 17"><rect x="0.500" y="0.500" width="17" height="16" fill="#fff" stroke="#444" stroke-width="1"/><path d="M1 1L17 16M17 1L1 16" stroke="#222" stroke-width="1"/></svg>
<div class="a" style="left:1348px;top:184px;width:18px;height:17px;background:#141614"></div>
<div class="a" style="left:1348px;top:201px;width:18px;height:17px;background:#333333"></div>
<div class="a" style="left:1348px;top:218px;width:18px;height:17px;background:#4d4d4d"></div>
<div class="a" style="left:1348px;top:235px;width:18px;height:17px;background:#666666"></div>
<div class="a" style="left:1348px;top:252px;width:18px;height:17px;background:#808080"></div>
<div class="a" style="left:1348px;top:269px;width:18px;height:17px;background:#999999"></div>
<div class="a" style="left:1348px;top:286px;width:18px;height:17px;background:#b3b3b3"></div>
<div class="a" style="left:1348px;top:303px;width:18px;height:17px;background:#c9c9c9"></div>
<div class="a" style="left:1348px;top:320px;width:18px;height:17px;background:#dcdcdc"></div>
<div class="a" style="left:1348px;top:337px;width:18px;height:17px;background:#ebebeb"></div>
<div class="a" style="left:1348px;top:354px;width:18px;height:17px;background:#ffffff"></div>
<div class="a" style="left:1348px;top:371px;width:18px;height:17px;background:#fff"></div>
<div class="a" style="left:1349px;top:372px;width:16px;height:16px;background:#3c2c9c"></div>
<div class="a" style="left:1348px;top:388px;width:18px;height:17px;background:#00a0dc"></div>
<div class="a" style="left:1348px;top:405px;width:18px;height:17px;background:#10a860"></div>
<div class="a" style="left:1348px;top:422px;width:18px;height:17px;background:#ffe010"></div>
<div class="a" style="left:1348px;top:439px;width:18px;height:17px;background:#e03020"></div>
<div class="a" style="left:1348px;top:456px;width:18px;height:17px;background:#e4008c"></div>
<div class="a" style="left:1348px;top:473px;width:18px;height:17px;background:#b0408c"></div>
<div class="a" style="left:1348px;top:490px;width:18px;height:17px;background:#f08000"></div>
<div class="a" style="left:1348px;top:507px;width:18px;height:17px;background:#ffb8b8"></div>
<div class="a" style="left:1348px;top:524px;width:18px;height:17px;background:#786860"></div>
<div class="a" style="left:1348px;top:541px;width:18px;height:17px;background:#dcd8f4"></div>
<div class="a" style="left:1348px;top:558px;width:18px;height:17px;background:#b0a4e0"></div>
<div class="a" style="left:1348px;top:575px;width:18px;height:17px;background:#7890d4"></div>
<div class="a" style="left:1348px;top:592px;width:18px;height:17px;background:#8870c8"></div>
<div class="a" style="left:1348px;top:609px;width:18px;height:17px;background:#9088b8"></div>
<div class="a" style="left:1348px;top:626px;width:18px;height:17px;background:#4c5c8c"></div>
<div class="a" style="left:1348px;top:643px;width:18px;height:10px;background:#544c68"></div>
<svg style="left:1352px;top:658px" width="10" height="7" viewBox="0 0 10 7"><path d="M0.700 0.800L5 5.500L9.300 0.800" fill="none" stroke="#a4aab4" stroke-width="1.600"/></svg>
<svg style="left:1352px;top:675px" width="10" height="8" viewBox="0 0 10 8"><path d="M0.700 0.500L4 4L0.700 7.500M5.200 0.500L8.500 4L5.200 7.500" fill="none" stroke="#a4aab8" stroke-width="1.300"/></svg>
<!-- status bar -->
<div class="a" style="left:0;top:694px;width:1366px;height:34px;background:#f7f7f7;border-top:1px solid #dcdcdc"></div>
<div class="t" id="coords" style="left:5px;top:705px;transform:scaleX(0.912);transform-origin:0 0">( 104,855; -8,479 )</div>
<div class="a" style="left:105px;top:704px;width:15px;height:15px;background:#fff;border:1px solid #000"></div>
<svg style="left:110px;top:707px" width="6" height="9" viewBox="0 0 6 9"><path d="M0 0L6 4.500L0 9z" fill="#000"/></svg>
<div class="t" id="stat" style="left:158px;top:705px;letter-spacing:-0.12px">Prowadnica na Prowadnice</div>
<!-- monitor -->
<svg style="left:912px;top:704px" width="15" height="15" viewBox="0 0 15 15"><rect x="0.500" y="0.500" width="14" height="12" rx="1" fill="#fff" stroke="#5a5a84" stroke-width="1"/><rect x="1.500" y="1.500" width="12" height="3.500" fill="#d8a4a8"/><rect x="1.500" y="5" width="12" height="3" fill="#84a874"/><rect x="1.500" y="8" width="12" height="3.500" fill="#a4b8e4"/><circle cx="7.500" cy="6.500" r="2.600" fill="#fff" stroke="#111" stroke-width="1.300"/><rect x="3.500" y="14" width="8" height="1" fill="#6a6a94"/></svg>
<!-- bucket -->
<svg style="left:940px;top:703px" width="17" height="16" viewBox="0 0 17 16"><path d="M6.500 1.500L1.500 8.500 6.500 14.500 13 9z" fill="#fff" stroke="#4c4c74" stroke-width="1.200" stroke-linejoin="round"/><path d="M2.800 9.500h9.500L6.500 14.500z" fill="#f08000"/><path d="M5 0.800l4 5.200M8.500 0.800L7 3" stroke="#4c4c74" stroke-width="1.100" fill="none"/><circle cx="8.800" cy="6.500" r="0.900" fill="#4c4c74"/><path d="M11 8.500c2.500-2 4-1.500 4 1v3.500" fill="none" stroke="#f08000" stroke-width="1.500"/></svg>
<svg style="left:962px;top:702px" width="18" height="18" viewBox="0 0 18 18"><rect x="0.500" y="0.500" width="17" height="17" fill="#fff" stroke="#8c8c8c" stroke-width="1"/><path d="M1 1L17 17M17 1L1 17" stroke="#111" stroke-width="1.100"/></svg>
<div class="t" style="left:983px;top:705px">Brak</div>
<div class="sep" style="left:1144px;top:700px;height:22px;background:#d8d8d8"></div>
<!-- pen nib -->
<svg style="left:1153px;top:703px" width="10" height="16" viewBox="0 0 10 16"><path d="M5 1C3 3.500 1.500 7 1.500 10l1.500 2.500h4L8.500 10C8.500 7 7 3.500 5 1z" fill="#fff" stroke="#4c4c6c" stroke-width="1"/><path d="M5 4v5" stroke="#4c4c6c" stroke-width="0.800"/><circle cx="5" cy="9" r="0.900" fill="#4c4c6c"/><rect x="2" y="12.500" width="6" height="1.500" fill="#8c8ca4"/><rect x="1" y="14.500" width="8" height="1.200" fill="#1c1c2c"/></svg>
<div class="a" style="left:1171px;top:702px;width:18px;height:18px;background:#0000ff;border:1px solid #a8a8a8"></div>
<div class="t" id="rgb" style="left:1193px;top:705px;transform:scaleX(0.884);transform-origin:0 0">R:0 G:0 B:255 (#0000FF)</div>
</body></html>
